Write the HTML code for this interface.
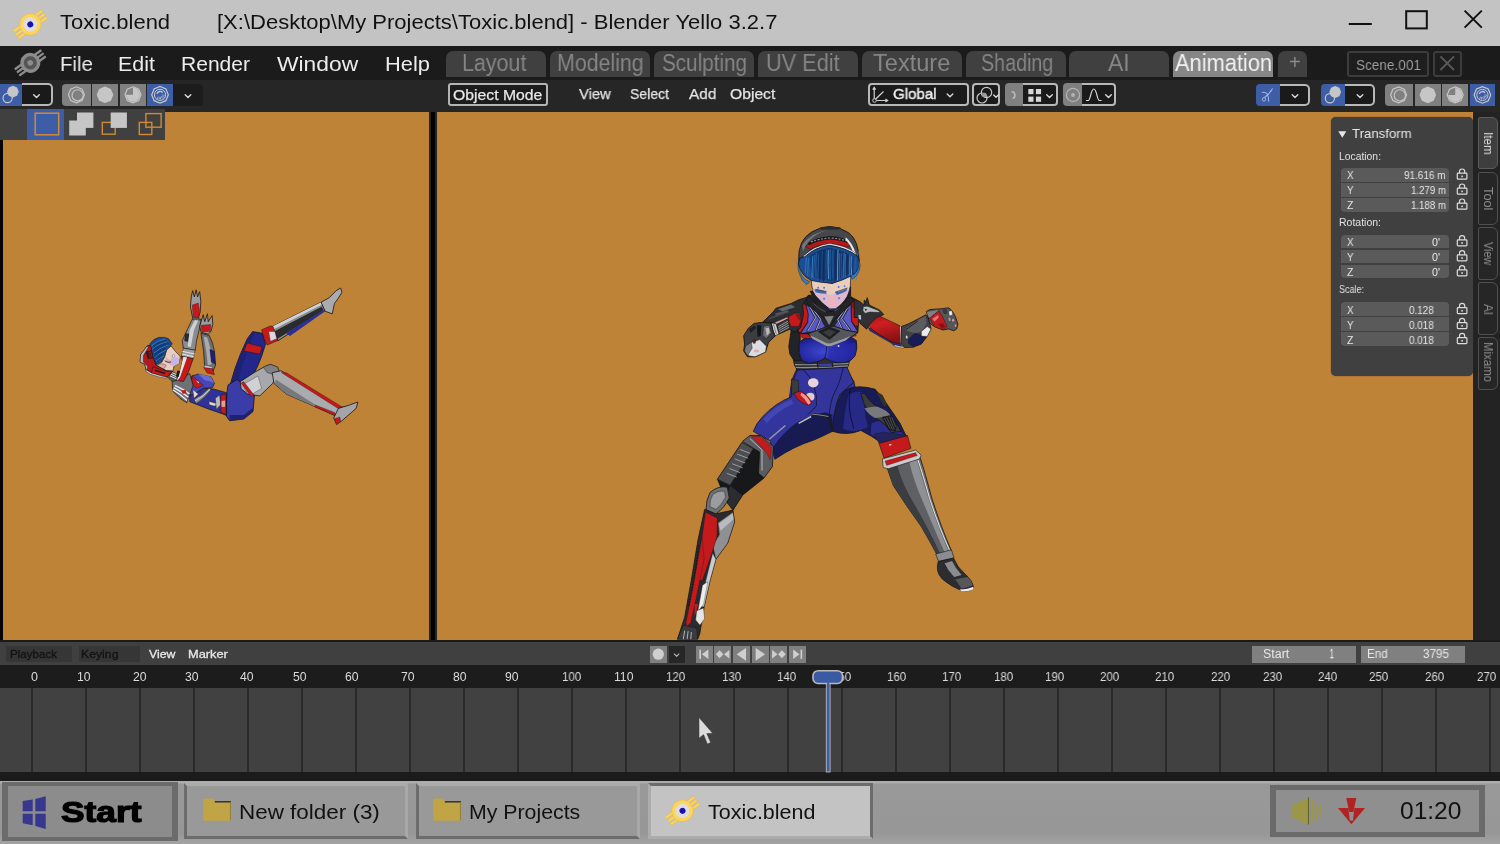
<!DOCTYPE html>
<html><head><meta charset="utf-8"><title>Toxic.blend - Blender Yello 3.2.7</title>
<style>
html,body{margin:0;padding:0;background:#a2a2a2;overflow:hidden}
#root{position:relative;width:1500px;height:844px;overflow:hidden;font-family:"Liberation Sans",sans-serif;background:#242424}
.a{position:absolute;box-sizing:border-box}
.t{position:absolute;white-space:pre;line-height:1;transform-origin:0 50%;display:block;will-change:transform}
svg{position:absolute;left:0;top:0;overflow:visible}

.tab{position:absolute;top:50.5px;height:26.5px;background:#404040;border-radius:7px 7px 0 0}
.gb{position:absolute;background:#808080}
.dd{position:absolute;background:#1a1a1a;border:2.3px solid #b8b8b8;box-sizing:border-box}
.fld{position:absolute;left:1341.3px;width:107.5px;height:13.8px;background:#5a5a5a}
.vt{position:absolute;left:1478px;width:19.7px;height:52.4px;box-sizing:border-box;border:1px solid #505050;border-radius:2px 6px 6px 2px;background:#262626}
.vtt{position:absolute;white-space:pre;line-height:1;transform-origin:0 0;will-change:transform}

</style></head><body><div id="root">
<div class="a" style="left:0px;top:0px;width:1500px;height:45.6px;background:#c3c3c3;"></div>
<div class="a" style="left:0px;top:45.6px;width:1500px;height:34.4px;background:#1b1b1b;"></div>
<div class="a" style="left:0px;top:80px;width:1500px;height:32px;background:#262626;"></div>
<div class="a" style="left:0px;top:111.7px;width:1500px;height:528px;background:#bf8338;"></div>
<div class="a" style="left:0px;top:139.5px;width:3px;height:501px;background:#050505;"></div>
<div class="a" style="left:429px;top:111.7px;width:8px;height:528.3px;background:#252525;"></div>
<div class="a" style="left:431.3px;top:112.3px;width:3.4px;height:527.7px;background:#000;"></div>
<div class="a" style="left:1473px;top:111.7px;width:27px;height:528.3px;background:#232323;"></div>
<div class="a" style="left:0px;top:639.7px;width:1500px;height:2.5px;background:#1a1a1a;"></div>
<div class="a" style="left:0px;top:642px;width:1500px;height:23px;background:#404040;"></div>
<div class="a" style="left:0px;top:665px;width:1500px;height:23px;background:#1c1c1c;"></div>
<div class="a" style="left:0px;top:688px;width:1500px;height:84px;background:#414141;"></div>
<div class="a" style="left:31.2px;top:688px;width:2px;height:84px;background:#2a2a2a;"></div>
<div class="a" style="left:85.18px;top:688px;width:2px;height:84px;background:#2a2a2a;"></div>
<div class="a" style="left:139.16px;top:688px;width:2px;height:84px;background:#2a2a2a;"></div>
<div class="a" style="left:193.14px;top:688px;width:2px;height:84px;background:#2a2a2a;"></div>
<div class="a" style="left:247.12px;top:688px;width:2px;height:84px;background:#2a2a2a;"></div>
<div class="a" style="left:301.1px;top:688px;width:2px;height:84px;background:#2a2a2a;"></div>
<div class="a" style="left:355.08px;top:688px;width:2px;height:84px;background:#2a2a2a;"></div>
<div class="a" style="left:409.06px;top:688px;width:2px;height:84px;background:#2a2a2a;"></div>
<div class="a" style="left:463.04px;top:688px;width:2px;height:84px;background:#2a2a2a;"></div>
<div class="a" style="left:517.02px;top:688px;width:2px;height:84px;background:#2a2a2a;"></div>
<div class="a" style="left:571.0px;top:688px;width:2px;height:84px;background:#2a2a2a;"></div>
<div class="a" style="left:624.98px;top:688px;width:2px;height:84px;background:#2a2a2a;"></div>
<div class="a" style="left:678.96px;top:688px;width:2px;height:84px;background:#2a2a2a;"></div>
<div class="a" style="left:732.94px;top:688px;width:2px;height:84px;background:#2a2a2a;"></div>
<div class="a" style="left:786.92px;top:688px;width:2px;height:84px;background:#2a2a2a;"></div>
<div class="a" style="left:840.9px;top:688px;width:2px;height:84px;background:#2a2a2a;"></div>
<div class="a" style="left:894.88px;top:688px;width:2px;height:84px;background:#2a2a2a;"></div>
<div class="a" style="left:948.86px;top:688px;width:2px;height:84px;background:#2a2a2a;"></div>
<div class="a" style="left:1002.84px;top:688px;width:2px;height:84px;background:#2a2a2a;"></div>
<div class="a" style="left:1056.82px;top:688px;width:2px;height:84px;background:#2a2a2a;"></div>
<div class="a" style="left:1110.8px;top:688px;width:2px;height:84px;background:#2a2a2a;"></div>
<div class="a" style="left:1164.78px;top:688px;width:2px;height:84px;background:#2a2a2a;"></div>
<div class="a" style="left:1218.76px;top:688px;width:2px;height:84px;background:#2a2a2a;"></div>
<div class="a" style="left:1272.74px;top:688px;width:2px;height:84px;background:#2a2a2a;"></div>
<div class="a" style="left:1326.72px;top:688px;width:2px;height:84px;background:#2a2a2a;"></div>
<div class="a" style="left:1380.7px;top:688px;width:2px;height:84px;background:#2a2a2a;"></div>
<div class="a" style="left:1434.68px;top:688px;width:2px;height:84px;background:#2a2a2a;"></div>
<div class="a" style="left:1488.66px;top:688px;width:2px;height:84px;background:#2a2a2a;"></div>
<div class="a" style="left:0px;top:772px;width:1500px;height:8.8px;background:#1b1b1b;"></div>
<div class="a" style="left:0px;top:780.8px;width:1500px;height:63.2px;background:linear-gradient(#adadad 0,#adadad 1.4px,#999 3.5px,#979797 52px,#a3a3a3 63px);"></div>
<div class="tab" style="left:446px;width:100px;background:#404040"></div>
<div class="tab" style="left:550px;width:100px;background:#404040"></div>
<div class="tab" style="left:654px;width:100px;background:#404040"></div>
<div class="tab" style="left:758px;width:100px;background:#404040"></div>
<div class="tab" style="left:862px;width:100px;background:#404040"></div>
<div class="tab" style="left:966px;width:100px;background:#404040"></div>
<div class="tab" style="left:1069px;width:100px;background:#404040"></div>
<div class="tab" style="left:1173px;width:100px;background:#868686"></div>
<div class="tab" style="left:1277.6px;width:29.6px"></div>
<div class="a" style="left:1347.2px;top:51.2px;width:81.6px;height:25.6px;background:#1e1e1e;border:2.2px solid #3c3c3c;border-radius:3px"></div>
<div class="a" style="left:1432.5px;top:51.2px;width:29.5px;height:25.6px;background:#1e1e1e;border:2.2px solid #3c3c3c;border-radius:3px"></div>
<div class="a" style="left:0px;top:83.6px;width:22px;height:22.4px;background:#3d5ea6;"></div>
<div class="dd" style="left:22px;top:83.4px;width:31px;height:23px;border-left:none;border-radius:0 5px 5px 0"></div>
<div class="a" style="left:61.9px;top:83.6px;width:29.0px;height:22.4px;background:#808080;border-radius:4px 0 0 4px"></div>
<div class="a" style="left:92.1px;top:83.6px;width:25.9px;height:22.4px;background:#808080;border-radius:0"></div>
<div class="a" style="left:120px;top:83.6px;width:26px;height:22.4px;background:#808080;border-radius:0"></div>
<div class="a" style="left:147px;top:83.6px;width:26px;height:22.4px;background:#3d5ea6;"></div>
<div class="a" style="left:173px;top:83.6px;width:30px;height:22.4px;background:#1c1c1c;border-radius:0 4px 4px 0"></div>
<div class="a" style="left:447.5px;top:83.3px;width:100.5px;height:22.7px;background:#1c1c1c;border:2px solid #b4b4b4;border-radius:3px"></div>
<div class="dd" style="left:868.1px;top:83.4px;width:100.8px;height:23px;border-radius:4px"></div>
<div class="dd" style="left:972px;top:83.4px;width:28px;height:23px;border-radius:4px"></div>
<div class="a" style="left:1004.5px;top:83.4px;width:21px;height:23px;background:#808080;border-radius:4px 0 0 4px"></div>
<div class="dd" style="left:1023.4px;top:83.4px;width:34.2px;height:23px;border-left:none;border-radius:0 4px 4px 0"></div>
<div class="a" style="left:1063px;top:83.4px;width:21px;height:23px;background:#808080;border-radius:4px 0 0 4px"></div>
<div class="dd" style="left:1081.7px;top:83.4px;width:34.8px;height:23px;border-left:none;border-radius:0 4px 4px 0"></div>
<div class="a" style="left:1256px;top:84px;width:24px;height:21.8px;background:#3d5ea6;border-radius:4px 0 0 4px"></div>
<div class="dd" style="left:1280px;top:84px;width:30px;height:21.8px;border-left:none;border-radius:0 5px 5px 0"></div>
<div class="a" style="left:1321px;top:84px;width:24px;height:21.8px;background:#3d5ea6;border-radius:4px 0 0 4px"></div>
<div class="dd" style="left:1345px;top:84px;width:29.5px;height:21.8px;border-left:none;border-radius:0 5px 5px 0"></div>
<div class="a" style="left:1384.5px;top:84px;width:28.3px;height:21.8px;background:#808080;border-radius:4px 0 0 4px"></div>
<div class="a" style="left:1414.9px;top:84px;width:25.9px;height:21.8px;background:#808080;border-radius:0"></div>
<div class="a" style="left:1442.4px;top:84px;width:25.6px;height:21.8px;background:#808080;border-radius:0"></div>
<div class="a" style="left:1469.6px;top:84px;width:25.6px;height:21.8px;background:#3d5ea6;"></div>
<div class="a" style="left:0px;top:109.2px;width:165px;height:30.4px;background:#404040;"></div>
<div class="a" style="left:27.1px;top:109.2px;width:36.7px;height:30.4px;background:#3d5ea6;"></div>
<div class="a" style="left:6.3px;top:646.2px;width:66.2px;height:16.3px;background:#363636;"></div>
<div class="a" style="left:78.8px;top:646.2px;width:60.9px;height:16.3px;background:#363636;"></div>
<div class="a" style="left:649.8px;top:645.9px;width:17px;height:16.8px;background:#808080;"></div>
<div class="a" style="left:668.6px;top:645.9px;width:16.1px;height:16.8px;background:#262626;"></div>
<div class="a" style="left:695.7px;top:645.9px;width:16.9px;height:16.8px;background:#808080;"></div>
<div class="a" style="left:714.34px;top:645.9px;width:16.9px;height:16.8px;background:#808080;"></div>
<div class="a" style="left:732.98px;top:645.9px;width:16.9px;height:16.8px;background:#808080;"></div>
<div class="a" style="left:751.62px;top:645.9px;width:16.9px;height:16.8px;background:#808080;"></div>
<div class="a" style="left:770.26px;top:645.9px;width:16.9px;height:16.8px;background:#808080;"></div>
<div class="a" style="left:788.9px;top:645.9px;width:16.9px;height:16.8px;background:#808080;"></div>
<div class="a" style="left:1252px;top:646px;width:104px;height:16.6px;background:#808080;"></div>
<div class="a" style="left:1361px;top:646px;width:104px;height:16.6px;background:#808080;"></div>
<div class="a" style="left:2px;top:781.7px;width:176.4px;height:59px;background:#8c8c8c;border:solid #6b6b6b;border-width:4.6px 6.3px"></div>
<div class="a" style="left:184.2px;top:782.5px;width:223.8px;height:56.2px;background:#999;border-left:3.3px solid #6c6c6c;border-bottom:3px solid #6c6c6c;border-top:3.5px solid #ababab;border-right:3.3px solid #a9a9a9"></div>
<div class="a" style="left:415.8px;top:782.5px;width:223.9px;height:56.2px;background:#999;border-left:3.3px solid #6c6c6c;border-bottom:3px solid #6c6c6c;border-top:3.5px solid #ababab;border-right:3.3px solid #a9a9a9"></div>
<div class="a" style="left:647.5px;top:783px;width:225px;height:56.2px;background:#c3c3c3;border-top:3.2px solid #6c6c6c;border-right:3.5px solid #6c6c6c;border-left:3.5px solid #acacac;border-bottom:3.2px solid #acacac"></div>
<div class="a" style="left:1270px;top:784.7px;width:215.3px;height:52.3px;background:#8f8f8f;border:solid #6a6a6a;border-width:5px 6.7px"></div>
<div class="a" style="left:1331px;top:117.3px;width:141.5px;height:258.5px;background:#404040;border-radius:5px;box-shadow:0 0 1px #2a2a2a"></div>
<div class="fld" style="top:168.0px;border-radius:4px 4px 0 0"></div>
<div class="fld" style="top:183.0px;border-radius:0"></div>
<div class="fld" style="top:198.0px;border-radius:0 0 4px 4px"></div>
<div class="fld" style="top:234.6px;border-radius:4px 4px 0 0"></div>
<div class="fld" style="top:249.6px;border-radius:0"></div>
<div class="fld" style="top:264.6px;border-radius:0 0 4px 4px"></div>
<div class="fld" style="top:302.4px;border-radius:4px 4px 0 0"></div>
<div class="fld" style="top:317.4px;border-radius:0"></div>
<div class="fld" style="top:332.4px;border-radius:0 0 4px 4px"></div>
<div class="vt" style="top:117px;background:#3e3e3e;border-color:#5c5c5c"></div>
<div class="vt" style="top:172.4px;"></div>
<div class="vt" style="top:227.4px;"></div>
<div class="vt" style="top:282.3px;"></div>
<div class="vt" style="top:337.4px;"></div>
<svg width="1500" height="844" viewBox="0 0 1500 844">
<defs><clipPath id="vp"><rect x="437" y="112" width="1036" height="527.7"/></clipPath><clipPath id="vpl"><rect x="3" y="112" width="426" height="527.7"/></clipPath></defs><g clip-path="url(#vp)"><polygon points="797.1,368.2 846.0,367.7 849.3,374.7 853.8,381.2 855.1,387.1 846.0,390.4 836.9,398.2 833.0,403.4 788.7,403.4 790.6,389.1 791.9,379.9" fill="#33359c" stroke="#141414" stroke-width="0.8" stroke-linejoin="round" />
<polygon points="797.1,368.2 805.6,373.4 813.4,386.5 816.0,403.4 788.7,403.4 790.6,389.1 791.9,379.9" fill="#2b2d8c" stroke="#141414" stroke-width="0" stroke-linejoin="round" />
<g transform="translate(740,370) scale(0.177778)" stroke-linejoin="round"><path d="M520,250 Q560,130 600,110 Q660,80 760,108 Q830,190 900,300 L932,366 L800,412 Q740,370 680,340 Q600,372 520,345 Z" fill="#191b58" stroke="#141414" stroke-width="0.8" vector-effect="non-scaling-stroke" /><path d="M610,140 Q650,110 700,130 Q690,220 720,320 L680,338 Q620,350 580,330 Q590,220 610,140 Z" fill="#262a86" stroke="#141414" stroke-width="0" vector-effect="non-scaling-stroke" /><path d="M740,300 L800,280 L880,330 L925,365 L800,410 Q770,380 735,360 Z" fill="#2a2d8e" stroke="#141414" stroke-width="0" vector-effect="non-scaling-stroke" /><path d="M620,110 Q600,200 640,330" fill="none" stroke="#0c0d2a" stroke-width="0.8" vector-effect="non-scaling-stroke" /><path d="M678,130 L702,132 Q730,180 770,205 Q830,225 870,280 L905,345 L850,352 Q820,300 760,270 Q720,240 700,195 Z" fill="#3a3b3f" stroke="#141414" stroke-width="0.8" vector-effect="non-scaling-stroke" /><path d="M700,215 Q740,205 770,205 Q830,225 850,260 L760,270 Q720,250 700,215 Z" fill="#77797d" stroke="#141414" stroke-width="0" vector-effect="non-scaling-stroke" /><path d="M800,265 L850,255 L882,300 L875,345 L835,335 Z" fill="#1c1d20" stroke="#141414" stroke-width="0.4" vector-effect="non-scaling-stroke" /><path d="M812,270 L845,330 M825,265 L858,335 M840,262 L868,335 M853,265 L876,320" fill="none" stroke="#6a6c70" stroke-width="0.6" vector-effect="non-scaling-stroke" /><path d="M760,120 L800,140 L830,200 L810,210 Z" fill="#2f3034" stroke="#141414" stroke-width="0.4" vector-effect="non-scaling-stroke" /><path d="M330,-20 L600,-20 L640,70 Q600,100 560,140 Q520,250 520,345 Q470,370 420,392 Q300,430 196,502 L170,400 L75,345 Q90,300 130,260 Q200,185 290,150 Q285,80 330,-20 Z" fill="#33359c" stroke="#141414" stroke-width="0.8" vector-effect="non-scaling-stroke" /><path d="M330,290 Q400,250 480,238 L520,250 L520,345 Q470,370 420,392 Q300,430 196,502 L180,440 Q260,330 330,290 Z" fill="#181a52" stroke="#141414" stroke-width="0" vector-effect="non-scaling-stroke" /><path d="M130,275 Q200,200 290,165 L300,190 Q210,230 150,300 Z" fill="#4a4ec0" stroke="" stroke-width="0" vector-effect="non-scaling-stroke" opacity="0.7"/><path d="M405,248 Q470,255 498,262 Q515,300 520,345" fill="none" stroke="#1a1b1e" stroke-width="2.2" vector-effect="non-scaling-stroke" /><path d="M405,248 Q470,255 498,262" fill="none" stroke="#a0a2a6" stroke-width="0.8" vector-effect="non-scaling-stroke" /><path d="M330,300 L400,262" fill="none" stroke="#b9bbbf" stroke-width="1.6" vector-effect="non-scaling-stroke" /><path d="M165,390 L255,312" fill="none" stroke="#9a9ca0" stroke-width="1.4" vector-effect="non-scaling-stroke" /><path d="M350,-10 Q440,80 430,200 Q400,240 380,250" fill="none" stroke="#10112e" stroke-width="0.8" vector-effect="non-scaling-stroke" /><path d="M580,-10 Q560,80 530,130 Q510,170 500,260" fill="none" stroke="#10112e" stroke-width="0.8" vector-effect="non-scaling-stroke" /><ellipse cx="412" cy="72" rx="30" ry="26" fill="#e6d4d8"/><ellipse cx="395" cy="150" rx="24" ry="22" fill="#e9c9c8"/><path d="M290,50 L330,60 L330,120 L290,140 Z" fill="#3a3b3f" stroke="#141414" stroke-width="0.5" vector-effect="non-scaling-stroke" /><path d="M305,130 L340,118 Q385,140 405,185 L385,198 Q350,190 320,160 Z" fill="#c41a1c" stroke="#141414" stroke-width="0.5" vector-effect="non-scaling-stroke" /><path d="M345,128 Q380,145 398,185 L385,195 Q365,160 340,140 Z" fill="#ee9a98" stroke="#141414" stroke-width="0" vector-effect="non-scaling-stroke" /></g>
<g transform="translate(670,420) scale(0.266667)" stroke-linejoin="round"><path d="M272,80 L300,58 L342,58 L388,100 L384,175 L352,218 L330,200 L335,120 Z" fill="#5a5c60" stroke="#141414" stroke-width="0.8" vector-effect="non-scaling-stroke" /><path d="M305,62 L340,62 L380,102 L376,150 L360,120 Z" fill="#c41a1c" stroke="#141414" stroke-width="0.3" vector-effect="non-scaling-stroke" /><path d="M300,70 L345,112 L345,190" fill="none" stroke="#b9bbbf" stroke-width="1.0" vector-effect="non-scaling-stroke" /><path d="M270,84 L335,120 L332,200 L352,218 L272,282 L236,338 L210,300 L178,222 Z" fill="#17181a" stroke="#141414" stroke-width="0.8" vector-effect="non-scaling-stroke" /><path d="M270,84 L312,108 L225,245 L178,222 Z" fill="#4c4e52" stroke="#141414" stroke-width="0.4" vector-effect="non-scaling-stroke" /><path d="M262,110 L300,125 M252,128 L292,143 M243,146 L282,161 M233,164 L272,179 M223,182 L262,197 M213,200 L250,214" fill="none" stroke="#9a9ca0" stroke-width="1.0" vector-effect="non-scaling-stroke" /><path d="M225,245 L272,282 L236,338 L205,300 Z" fill="#2b2c30" stroke="#141414" stroke-width="0.4" vector-effect="non-scaling-stroke" /><path d="M130,335 L172,352 L236,338 L242,382 L216,462 L172,522 L150,602 L128,700 L112,800 L104,822 L28,822 L55,740 L80,600 L105,450 Z" fill="#2a2b2e" stroke="#141414" stroke-width="0.8" vector-effect="non-scaling-stroke" /><path d="M180,385 L236,345 L242,382 L216,462 L172,522 L160,470 L185,430 Z" fill="#8e9094" stroke="#141414" stroke-width="0.4" vector-effect="non-scaling-stroke" /><path d="M172,522 L150,602 L128,700 L118,700 L135,600 L160,500 Z" fill="#c9cbce" stroke="#141414" stroke-width="0.3" vector-effect="non-scaling-stroke" /><path d="M182,390 L236,350 L238,372 L190,415 Z" fill="#b9bbbf" stroke="#141414" stroke-width="0" vector-effect="non-scaling-stroke" /><path d="M133,345 L178,368 L176,440 L150,520 L122,600 L100,606 L114,480 Z" fill="#c41a1c" stroke="#141414" stroke-width="0.4" vector-effect="non-scaling-stroke" /><path d="M120,440 L128,520 L104,640 L78,760 L62,775 L60,760 L84,640 Z" fill="#c41a1c" stroke="#141414" stroke-width="0.3" vector-effect="non-scaling-stroke" /><path d="M108,470 L96,560 L70,700" fill="none" stroke="#141414" stroke-width="1.1" vector-effect="non-scaling-stroke" stroke-dasharray="1.5 1.5"/><path d="M122,620 L142,606 L126,690 L104,720 Z" fill="#ededef" stroke="#141414" stroke-width="0.3" vector-effect="non-scaling-stroke" /><path d="M100,715 L126,705 L130,745 L112,770 L96,750 Z" fill="#e4e4e6" stroke="#141414" stroke-width="0.4" vector-effect="non-scaling-stroke" /><path d="M92,690 L106,690 L92,740 Z" fill="#c41a1c" stroke="#141414" stroke-width="0" vector-effect="non-scaling-stroke" /><path d="M150,272 Q180,245 215,252 L222,292 Q205,330 172,352 L135,336 Q135,300 150,272 Z" fill="#6e7074" stroke="#141414" stroke-width="0.8" vector-effect="non-scaling-stroke" /><path d="M160,280 Q182,262 205,268 L208,290 Q195,318 172,335 L150,325 Q148,300 160,280 Z" fill="#9a9ca0" stroke="#141414" stroke-width="0.4" vector-effect="non-scaling-stroke" /><path d="M50,770 L100,780 L104,822 L28,822 Z" fill="#3a3b3f" stroke="#141414" stroke-width="0.4" vector-effect="non-scaling-stroke" /><path d="M55,790 L50,822 M68,792 L64,822 M80,795 L78,822" fill="none" stroke="#d0d0d2" stroke-width="0.8" vector-effect="non-scaling-stroke" /></g>
<defs><linearGradient id="shinR" x1="0" y1="0" x2="1" y2="0"><stop offset="0" stop-color="#242528"/><stop offset="0.3" stop-color="#5e6064"/><stop offset="0.6" stop-color="#8d8f93"/><stop offset="0.85" stop-color="#6a6c70"/><stop offset="1" stop-color="#d8d9dc"/></linearGradient></defs><g transform="translate(870,430) scale(0.21314)" stroke-linejoin="round"><path d="M82,182 L236,132 Q258,200 290,320 Q335,460 382,566 L314,584 Q280,520 240,452 Q170,355 110,262 Z" fill="#6e7074" stroke="#141414" stroke-width="0.8" vector-effect="non-scaling-stroke" /><path d="M82,182 L130,168 Q150,250 210,350 Q270,450 330,580 L314,584 Q280,520 240,452 Q170,355 110,262 Z" fill="#3c3d41" stroke="#141414" stroke-width="0" vector-effect="non-scaling-stroke" /><path d="M130,168 L185,150 Q205,240 250,340 Q300,460 350,574 L330,580 Q270,450 210,350 Q150,250 130,168 Z" fill="#5e6064" stroke="#141414" stroke-width="0" vector-effect="non-scaling-stroke" /><path d="M185,150 L220,138 Q240,220 275,325 Q320,460 368,570 L350,574 Q300,460 250,340 Q205,240 185,150 Z" fill="#8e9094" stroke="#141414" stroke-width="0" vector-effect="non-scaling-stroke" /><path d="M225,140 Q247,205 280,322 Q326,462 374,566" fill="none" stroke="#e4e5e8" stroke-width="1.0" vector-effect="non-scaling-stroke" /><path d="M42,62 L176,26 L192,86 L66,132 Z" fill="#c41a1c" stroke="#141414" stroke-width="0.6" vector-effect="non-scaling-stroke" /><path d="M90,70 L100,68" fill="none" stroke="#f6d0d0" stroke-width="1.5" vector-effect="non-scaling-stroke" /><path d="M58,136 L214,94 L240,118 L232,136 L86,182 L62,176 Z" fill="#c9cbce" stroke="#141414" stroke-width="0.6" vector-effect="non-scaling-stroke" /><path d="M70,146 L214,106 L222,120 L78,166 Z" fill="#c41a1c" stroke="#141414" stroke-width="0.3" vector-effect="non-scaling-stroke" /><path d="M20,20 L60,10 L175,26 L42,62 Z" fill="#23245e" stroke="#141414" stroke-width="0.4" vector-effect="non-scaling-stroke" /><path d="M308,582 L382,562 L394,600 L322,617 Z" fill="#8a8c90" stroke="#141414" stroke-width="0.6" vector-effect="non-scaling-stroke" /><path d="M320,617 L392,601 Q410,645 445,675 Q480,705 486,738 Q470,758 436,756 Q380,735 340,700 Q305,665 320,617 Z" fill="#2c2d31" stroke="#141414" stroke-width="0.7" vector-effect="non-scaling-stroke" /><path d="M350,625 L385,615 Q400,650 430,680 L395,690 Q365,660 350,625 Z" fill="#8a8c90" stroke="#141414" stroke-width="0" vector-effect="non-scaling-stroke" /><path d="M400,700 L460,690 Q478,710 482,730 L430,745 Z" fill="#55575b" stroke="#141414" stroke-width="0" vector-effect="non-scaling-stroke" /><path d="M420,748 Q460,748 486,736 L482,748 Q455,760 430,757 Z" fill="#ededef" stroke="#141414" stroke-width="0" vector-effect="non-scaling-stroke" /></g>
<defs><radialGradient id="bustL" cx="0.45" cy="0.55" r="0.6"><stop offset="0" stop-color="#3f49cf"/><stop offset="0.7" stop-color="#262aa6"/><stop offset="1" stop-color="#1b1e80"/></radialGradient></defs><g transform="translate(785,295) scale(0.094787)" stroke-linejoin="round"><path d="M40,540 L66,370 L160,350 L160,500 L145,610 L180,690 L100,702 L50,620 Z" fill="#222327" stroke="#141414" stroke-width="0.8" vector-effect="non-scaling-stroke" /><path d="M90,690 L180,690 L260,720 L360,700 L420,665 L470,690 L560,715 L680,700 L662,762 L130,792 L100,740 Z" fill="#2e2f33" stroke="#141414" stroke-width="0.8" vector-effect="non-scaling-stroke" /><path d="M105,735 Q380,740 672,722 M115,765 Q380,770 665,748" fill="none" stroke="#8a8c90" stroke-width="1.2" vector-effect="non-scaling-stroke" /><path d="M340,720 L350,765 M500,720 L505,760" fill="none" stroke="#17181a" stroke-width="1.2" vector-effect="non-scaling-stroke" /><path d="M355,722 L495,722 L498,752 L360,755 Z" fill="#3a3ea8" stroke="#141414" stroke-width="0.4" vector-effect="non-scaling-stroke" /><path d="M150,500 L200,460 L300,450 L440,535 L480,535 L600,470 L700,445 L752,480 Q770,560 740,640 Q700,700 640,712 L560,716 Q500,705 470,690 L420,662 Q390,690 360,700 L260,722 Q200,715 180,690 Q140,640 150,500 Z" fill="url(#bustL)" stroke="#141414" stroke-width="0.8" vector-effect="non-scaling-stroke" /><path d="M470,560 Q600,520 740,500 Q760,570 735,640 Q690,700 600,712 Q520,705 470,690 Q440,620 470,560 Z" fill="#262aa8" stroke="" stroke-width="0" vector-effect="non-scaling-stroke" opacity="0.6"/><path d="M420,662 Q440,600 440,540" fill="none" stroke="#12144a" stroke-width="0.8" vector-effect="non-scaling-stroke" /><circle cx="565" cy="538" r="10" fill="#e8d6c8"/><path d="M140,380 L165,90 L250,0 L700,20 L770,60 L775,320 L770,395 L700,440 L600,470 L480,535 L440,535 L300,450 L240,412 L150,412 Z" fill="#26272a" stroke="#141414" stroke-width="0.6" vector-effect="non-scaling-stroke" /><path d="M165,90 L216,100 L246,200 L240,282 L160,402 L140,380 L172,260 Z" fill="#c41a1c" stroke="#141414" stroke-width="0.5" vector-effect="non-scaling-stroke" /><path d="M700,70 L770,60 L775,322 L745,332 L700,272 Z" fill="#c41a1c" stroke="#141414" stroke-width="0.5" vector-effect="non-scaling-stroke" /><path d="M705,75 L765,68 L768,130 L708,140 Z" fill="#8f1517" stroke="#141414" stroke-width="0" vector-effect="non-scaling-stroke" /><path d="M150,412 L240,412 L282,440 L180,452 Z" fill="#c41a1c" stroke="#141414" stroke-width="0.4" vector-effect="non-scaling-stroke" /><path d="M660,420 L742,400 L752,430 L690,442 Z" fill="#c41a1c" stroke="#141414" stroke-width="0.4" vector-effect="non-scaling-stroke" /><path d="M220,100 L290,150 L380,250 L426,340 L300,386 L165,406 L240,290 L246,200 Z" fill="#5a58c4" stroke="#141414" stroke-width="0.6" vector-effect="non-scaling-stroke" /><path d="M520,330 L580,230 L660,130 L696,100 L700,280 L770,392 L640,372 Z" fill="#5a58c4" stroke="#141414" stroke-width="0.6" vector-effect="non-scaling-stroke" /><path d="M260,130 L322,240 L232,385 M300,160 L372,262 L322,378" fill="none" stroke="#2a2b50" stroke-width="2.2" vector-effect="non-scaling-stroke" /><path d="M262,126 L326,238 L240,380 M303,156 L376,258 L328,374" fill="none" stroke="#c9cbe6" stroke-width="0.8" vector-effect="non-scaling-stroke" /><path d="M664,140 L600,250 L690,372 M625,170 L560,262 L610,366" fill="none" stroke="#2a2b50" stroke-width="2.2" vector-effect="non-scaling-stroke" /><path d="M660,136 L596,248 L684,370 M621,166 L556,258 L604,364" fill="none" stroke="#c9cbe6" stroke-width="0.8" vector-effect="non-scaling-stroke" /><path d="M250,0 L300,60 L350,130 L430,180 L520,170 L600,120 L660,40 L700,20 L722,60 L640,150 L540,240 L470,332 L410,240 L330,180 L250,110 L220,60 Z" fill="#232427" stroke="#141414" stroke-width="0.8" vector-effect="non-scaling-stroke" /><path d="M410,225 L520,215 L466,326 Z" fill="#808286" stroke="#141414" stroke-width="0.5" vector-effect="non-scaling-stroke" /><path d="M300,90 Q360,150 430,180 M640,80 Q590,140 520,170" fill="none" stroke="#55575b" stroke-width="1.0" vector-effect="non-scaling-stroke" /><path d="M240,410 L426,340 L470,330 L520,330 L640,372 L770,395 L700,440 L600,470 L480,535 L440,535 L300,450 Z" fill="#55575b" stroke="#141414" stroke-width="0.8" vector-effect="non-scaling-stroke" /><path d="M350,386 L466,336 L580,380 L470,470 Z" fill="#1f2023" stroke="#141414" stroke-width="0.5" vector-effect="non-scaling-stroke" /><path d="M390,392 L466,360 L540,388 L470,445 Z" fill="#3a3b3f" stroke="#141414" stroke-width="0.4" vector-effect="non-scaling-stroke" /><path d="M262,422 L440,508 L480,512 L700,430 L640,480 L480,540 L440,540 L290,462 Z" fill="#9a9ca0" stroke="#141414" stroke-width="0" vector-effect="non-scaling-stroke" /></g>
<g transform="translate(738,295) scale(0.094787)" stroke-linejoin="round"><path d="M740,20 L640,50 L560,90 L400,140 L370,180 L262,286 L300,300 L360,292 L410,320 L430,412 L540,362 L600,392 L662,342 L692,200 L682,100 Z" fill="#2c2d31" stroke="#141414" stroke-width="0.8" vector-effect="non-scaling-stroke" /><path d="M420,150 L560,100 L602,130 L470,172 Z" fill="#66686c" stroke="#141414" stroke-width="0" vector-effect="non-scaling-stroke" /><path d="M392,195 L520,160 L542,180 L402,226 Z" fill="#55575b" stroke="#141414" stroke-width="0" vector-effect="non-scaling-stroke" /><path d="M330,240 L470,190 L480,205 L320,262 Z" fill="#47494d" stroke="#141414" stroke-width="0" vector-effect="non-scaling-stroke" /><path d="M530,232 L600,190 L652,190 L662,280 L642,332 L560,332 L540,290 Z" fill="#c41a1c" stroke="#141414" stroke-width="0.4" vector-effect="non-scaling-stroke" /><path d="M600,190 L652,190 L662,280 L630,250 Z" fill="#8f1517" stroke="#141414" stroke-width="0" vector-effect="non-scaling-stroke" /><path d="M392,290 L520,235 L526,250 L402,306 Z" fill="#d9a3a0" stroke="#141414" stroke-width="0" vector-effect="non-scaling-stroke" /><path d="M410,320 L520,252 L540,330 L540,362 L430,412 Z" fill="#3a3b3f" stroke="#141414" stroke-width="0.5" vector-effect="non-scaling-stroke" /><path d="M425,335 L528,275 M430,355 L532,295 M434,375 L536,318 M438,395 L540,340" fill="none" stroke="#9a9ca0" stroke-width="0.9" vector-effect="non-scaling-stroke" /><path d="M350,296 L400,300 L432,410 L392,432 L370,380 Z" fill="#c9cbce" stroke="#141414" stroke-width="0.6" vector-effect="non-scaling-stroke" /><path d="M372,300 L404,410" fill="none" stroke="#6e7074" stroke-width="0.8" vector-effect="non-scaling-stroke" /><path d="M262,288 L170,300 L110,350 L60,430 L70,520 L60,590 L100,652 L180,652 L290,602 L322,500 L392,432 L370,380 L350,296 Z" fill="#3c3d41" stroke="#141414" stroke-width="0.9" vector-effect="non-scaling-stroke" /><path d="M120,360 L180,320 L190,350 L130,400 Z" fill="#1f2023" stroke="#141414" stroke-width="0" vector-effect="non-scaling-stroke" /><path d="M200,320 L246,320 L240,432 L206,442 Z" fill="#141518" stroke="#141414" stroke-width="0" vector-effect="non-scaling-stroke" /><path d="M270,330 L330,320 L350,400 L300,460 L262,430 Z" fill="#6e7074" stroke="#141414" stroke-width="0.4" vector-effect="non-scaling-stroke" /><path d="M290,350 L325,345 L335,395 L305,430 Z" fill="#b9bbbf" stroke="#141414" stroke-width="0" vector-effect="non-scaling-stroke" /><path d="M140,500 L230,470 L300,540 L290,602 L180,652 L110,642 L90,580 Z" fill="#dcdde0" stroke="#141414" stroke-width="0.5" vector-effect="non-scaling-stroke" /><path d="M80,540 L140,500 L150,560 L100,640 L70,590 Z" fill="#77797d" stroke="#141414" stroke-width="0.4" vector-effect="non-scaling-stroke" /><path d="M160,470 L190,465 L185,510 L160,515 Z" fill="#5a1a1c" stroke="#141414" stroke-width="0" vector-effect="non-scaling-stroke" /><ellipse cx="195" cy="590" rx="28" ry="16" fill="#e3a9a8"/></g>
<defs><linearGradient id="armR" x1="0" y1="0" x2="0.35" y2="1"><stop offset="0" stop-color="#a51517"/><stop offset="0.35" stop-color="#d01e20"/><stop offset="1" stop-color="#8a1214"/></linearGradient></defs><g transform="translate(855,290) scale(0.082957)" stroke-linejoin="round"><path d="M-10,110 L60,140 L108,182 L112,120 L128,150 L148,92 L172,182 L300,245 L346,296 L262,332 L172,422 L140,472 L60,402 L40,332 L-10,332 Z" fill="#303135" stroke="#141414" stroke-width="0.8" vector-effect="non-scaling-stroke" /><path d="M100,200 L150,195 L290,250 L300,272 L180,266 L120,282 L95,250 Z" fill="#b9bbbf" stroke="#141414" stroke-width="0.5" vector-effect="non-scaling-stroke" /><path d="M115,225 L146,230 L130,256 Z" fill="#2a2b2f" stroke="#141414" stroke-width="0" vector-effect="non-scaling-stroke" /><path d="M40,300 L70,300 L75,360 L45,350 Z" fill="#b9bbd0" stroke="#141414" stroke-width="0" vector-effect="non-scaling-stroke" /><path d="M160,450 L200,470 L300,540 L460,630 L545,642 L560,680 L470,672 L440,642 L180,492 Z" fill="#2a2c8a" stroke="#141414" stroke-width="0.5" vector-effect="non-scaling-stroke" /><path d="M470,660 L560,680 L600,692 L580,700 L480,680 Z" fill="#d8d9dc" stroke="#141414" stroke-width="0.3" vector-effect="non-scaling-stroke" /><path d="M170,422 L262,332 L300,316 L540,430 L560,470 L546,642 L460,632 L300,542 L200,472 Z" fill="url(#armR)" stroke="#141414" stroke-width="0.6" vector-effect="non-scaling-stroke" /><path d="M549,440 L556,642" fill="none" stroke="#ecc9c9" stroke-width="1.0" vector-effect="non-scaling-stroke" /><path d="M560,440 L640,410 L760,350 L850,300 L880,320 L900,400 L916,470 L870,560 L800,650 L700,690 L600,692 L556,650 Z" fill="#3f4145" stroke="#141414" stroke-width="0.8" vector-effect="non-scaling-stroke" /><path d="M600,470 L760,360 L850,310 L862,400 L800,500 L720,522 L620,492 Z" fill="#5a5c60" stroke="#141414" stroke-width="0" vector-effect="non-scaling-stroke" /><path d="M610,480 L760,372" fill="none" stroke="#17181a" stroke-width="0.9" vector-effect="non-scaling-stroke" /><path d="M640,600 L720,520 L860,560 L800,650 L700,682 L650,652 Z" fill="#1a1c58" stroke="#141414" stroke-width="0.4" vector-effect="non-scaling-stroke" /><path d="M800,500 L870,440 L916,470 L870,560 L800,556 Z" fill="#ebebed" stroke="#141414" stroke-width="0.4" vector-effect="non-scaling-stroke" /><path d="M615,545 L635,560 L630,590 L612,575 Z" fill="#d8d9dc" stroke="#141414" stroke-width="0" vector-effect="non-scaling-stroke" /><path d="M860,260 L900,236 L1050,225 L1130,215 L1170,250 L1210,320 L1240,410 L1226,470 L1190,492 L1130,470 L1060,482 L960,442 L900,400 L880,320 Z" fill="#55575b" stroke="#141414" stroke-width="0.8" vector-effect="non-scaling-stroke" /><path d="M860,260 L1000,236 L1010,250 L900,340 L880,320 Z" fill="#7e8084" stroke="#141414" stroke-width="0.4" vector-effect="non-scaling-stroke" /><path d="M900,340 L1010,250 L1060,330 L1112,440 L1060,480 L960,442 Z" fill="#c41a1c" stroke="#141414" stroke-width="0.4" vector-effect="non-scaling-stroke" /><path d="M930,350 L1000,300 L1010,330 L960,380 Z" fill="#e9b4b4" stroke="" stroke-width="0" vector-effect="non-scaling-stroke" opacity="0.6"/><path d="M1000,410 L1060,400 L1090,440 L1050,470 Z" fill="#8a1214" stroke="#141414" stroke-width="0" vector-effect="non-scaling-stroke" /><path d="M1130,255 L1170,250 L1176,300 L1136,310 Z" fill="#f0f0f2" stroke="#141414" stroke-width="0.3" vector-effect="non-scaling-stroke" /><path d="M1060,240 L1100,235 L1110,280 L1075,285 Z" fill="#3a3b3f" stroke="#141414" stroke-width="0.3" vector-effect="non-scaling-stroke" /><ellipse cx="1182" cy="365" rx="16" ry="20" fill="#e6a0a0" stroke="#141414" stroke-width="3"/><ellipse cx="1212" cy="432" rx="13" ry="18" fill="#e6a0a0" stroke="#141414" stroke-width="3"/><path d="M1120,330 L1150,325 L1160,370 L1128,380 Z" fill="#9a9ca0" stroke="#141414" stroke-width="0.3" vector-effect="non-scaling-stroke" /></g>
<g transform="translate(780,220) scale(0.11848)" stroke-linejoin="round"><path d="M250,600 L300,700 L420,770 L520,740 L600,640 L600,560 Z" fill="#1f2023" stroke="#141414" stroke-width="0" vector-effect="non-scaling-stroke" /><path d="M262,500 L440,537 L597,470 Q606,560 566,645 Q520,720 470,744 L420,748 Q350,700 296,630 Q262,570 262,500 Z" fill="#e9cdbf" stroke="#141414" stroke-width="0.7" vector-effect="non-scaling-stroke" /><path d="M275,585 Q340,600 380,612 Q420,645 470,618 Q520,600 585,575 Q575,630 545,670 Q510,715 470,744 L420,748 Q360,705 305,640 Q283,610 275,585 Z" fill="#dcb9cf" stroke="#141414" stroke-width="0" vector-effect="non-scaling-stroke" /><path d="M290,585 Q340,590 390,606 L392,622 Q340,625 300,610 Z" fill="#3b66b0" stroke="#141414" stroke-width="0" vector-effect="non-scaling-stroke" /><path d="M465,612 Q520,600 568,578 L560,600 Q520,625 480,632 Z" fill="#3b66b0" stroke="#141414" stroke-width="0" vector-effect="non-scaling-stroke" /><path d="M300,585 L392,604" fill="none" stroke="#23242a" stroke-width="0.7" vector-effect="non-scaling-stroke" /><path d="M465,610 L570,574" fill="none" stroke="#23242a" stroke-width="0.7" vector-effect="non-scaling-stroke" /><path d="M418,640 Q440,632 462,640 L476,715 Q445,742 408,712 Z" fill="#f0b4be" stroke="#141414" stroke-width="0" vector-effect="non-scaling-stroke" /><path d="M395,742 Q440,760 490,738 L470,752 L420,756 Z" fill="#5752c0" stroke="#141414" stroke-width="0" vector-effect="non-scaling-stroke" /><circle cx="322" cy="572" r="8" fill="#5a6fd6"/><circle cx="372" cy="572" r="8" fill="#5a6fd6"/><circle cx="495" cy="565" r="8" fill="#5a6fd6"/><circle cx="545" cy="558" r="8" fill="#5a6fd6"/><circle cx="372" cy="665" r="8" fill="#5a6fd6"/><circle cx="498" cy="660" r="8" fill="#5a6fd6"/><path d="M158,335 Q150,170 270,100 Q340,58 420,55 Q505,58 580,108 Q665,170 668,345 L640,286 Q560,226 420,200 Q280,215 205,300 Z" fill="#45474b" stroke="#141414" stroke-width="0.9" vector-effect="non-scaling-stroke" /><path d="M185,215 Q260,105 420,78 Q330,100 262,160 Q215,205 195,265 Z" fill="#75777b" stroke="#141414" stroke-width="0" vector-effect="non-scaling-stroke" /><path d="M215,222 Q300,162 420,150 Q540,158 606,205 L566,230 Q500,205 420,200 Q320,208 250,246 Z" fill="#b5181b" stroke="#141414" stroke-width="0.4" vector-effect="non-scaling-stroke" /><path d="M232,196 Q310,146 420,136 Q530,142 590,184 L578,197 Q520,170 420,164 Q320,170 248,214 Z" fill="#17181b" stroke="#141414" stroke-width="0" vector-effect="non-scaling-stroke" /><path d="M262,186 Q330,158 420,152 Q500,154 560,176" fill="none" stroke="#8d8f93" stroke-width="1.2" vector-effect="non-scaling-stroke" stroke-dasharray="2 1.5"/><path d="M555,145 Q610,190 640,282 L612,262 Q595,205 552,168 Z" fill="#e8e8ea" stroke="#141414" stroke-width="0" vector-effect="non-scaling-stroke" /><path d="M340,62 L350,82 L500,80 L512,64 Q420,48 340,62 Z" fill="#2a2b2e" stroke="#141414" stroke-width="0" vector-effect="non-scaling-stroke" /><path d="M198,304 Q290,215 420,198 Q560,215 644,284 L646,300 Q560,236 420,214 Q300,226 210,316 Z" fill="#e2e3e6" stroke="#141414" stroke-width="0.3" vector-effect="non-scaling-stroke" /><path d="M206,312 Q300,228 420,214 Q556,236 645,298 Q680,335 668,400 Q650,450 600,472 Q520,515 440,533 Q340,530 262,510 Q200,480 170,420 Q146,365 160,325 Z" fill="#1c4c94" stroke="#141414" stroke-width="0.7" vector-effect="non-scaling-stroke" /><path d="M255,300 Q330,245 420,236 Q520,250 600,300 Q625,380 590,450 Q520,490 440,515 Q350,510 285,480 Q240,400 255,300 Z" fill="#123468" stroke="#141414" stroke-width="0" vector-effect="non-scaling-stroke" /><path d="M223,313 Q217,381 214,450" fill="none" stroke="#3d8fd0" stroke-width="0.6" vector-effect="non-scaling-stroke" /><path d="M241,325 Q235,398 234,472" fill="none" stroke="#2c6cb4" stroke-width="1.2" vector-effect="non-scaling-stroke" /><path d="M257,311 Q251,396 250,480" fill="none" stroke="#1f5aa0" stroke-width="0.6" vector-effect="non-scaling-stroke" /><path d="M277,301 Q271,395 270,488" fill="none" stroke="#3d8fd0" stroke-width="0.9" vector-effect="non-scaling-stroke" /><path d="M292,292 Q286,394 283,495" fill="none" stroke="#1f5aa0" stroke-width="1.2" vector-effect="non-scaling-stroke" /><path d="M306,276 Q300,379 304,482" fill="none" stroke="#3d8fd0" stroke-width="0.6" vector-effect="non-scaling-stroke" /><path d="M328,281 Q322,395 318,509" fill="none" stroke="#1f5aa0" stroke-width="0.9" vector-effect="non-scaling-stroke" /><path d="M341,278 Q335,394 334,510" fill="none" stroke="#0d2a5c" stroke-width="0.9" vector-effect="non-scaling-stroke" /><path d="M358,261 Q352,377 352,493" fill="none" stroke="#1f5aa0" stroke-width="0.6" vector-effect="non-scaling-stroke" /><path d="M370,259 Q364,390 369,520" fill="none" stroke="#0d2a5c" stroke-width="0.9" vector-effect="non-scaling-stroke" /><path d="M392,246 Q386,380 388,513" fill="none" stroke="#2c6cb4" stroke-width="0.6" vector-effect="non-scaling-stroke" /><path d="M408,254 Q402,377 410,500" fill="none" stroke="#5aa5dc" stroke-width="0.9" vector-effect="non-scaling-stroke" /><path d="M424,246 Q418,375 425,505" fill="none" stroke="#2c6cb4" stroke-width="0.9" vector-effect="non-scaling-stroke" /><path d="M442,259 Q436,380 447,502" fill="none" stroke="#1f5aa0" stroke-width="0.9" vector-effect="non-scaling-stroke" /><path d="M456,243 Q450,379 457,515" fill="none" stroke="#1f5aa0" stroke-width="0.9" vector-effect="non-scaling-stroke" /><path d="M469,252 Q463,387 465,522" fill="none" stroke="#0d2a5c" stroke-width="1.2" vector-effect="non-scaling-stroke" /><path d="M490,250 Q484,379 485,509" fill="none" stroke="#5aa5dc" stroke-width="0.9" vector-effect="non-scaling-stroke" /><path d="M505,280 Q499,389 500,498" fill="none" stroke="#2c6cb4" stroke-width="0.9" vector-effect="non-scaling-stroke" /><path d="M519,279 Q513,387 518,495" fill="none" stroke="#1f5aa0" stroke-width="0.9" vector-effect="non-scaling-stroke" /><path d="M542,276 Q536,380 533,485" fill="none" stroke="#2c6cb4" stroke-width="1.2" vector-effect="non-scaling-stroke" /><path d="M552,288 Q546,384 551,480" fill="none" stroke="#2c6cb4" stroke-width="1.2" vector-effect="non-scaling-stroke" /><path d="M569,305 Q563,389 564,473" fill="none" stroke="#0d2a5c" stroke-width="0.9" vector-effect="non-scaling-stroke" /><path d="M589,292 Q583,380 586,468" fill="none" stroke="#5aa5dc" stroke-width="0.6" vector-effect="non-scaling-stroke" /><path d="M602,307 Q596,391 606,475" fill="none" stroke="#5aa5dc" stroke-width="0.9" vector-effect="non-scaling-stroke" /><path d="M619,305 Q613,380 612,456" fill="none" stroke="#0d2a5c" stroke-width="0.6" vector-effect="non-scaling-stroke" /><path d="M637,324 Q631,386 636,448" fill="none" stroke="#1f5aa0" stroke-width="1.2" vector-effect="non-scaling-stroke" /><path d="M168,330 Q140,380 172,440 Q190,500 250,520 L228,545 Q185,520 170,470 Q135,400 168,330 Z" fill="#2f7fc0" stroke="#141414" stroke-width="0.4" vector-effect="non-scaling-stroke" /><path d="M662,330 Q690,380 668,430 Q650,480 610,500 L600,472 Q650,450 662,400 Z" fill="#2f7fc0" stroke="#141414" stroke-width="0.4" vector-effect="non-scaling-stroke" /><path d="M130,330 Q150,400 175,450 M205,500 L215,560 M655,300 L668,260 M650,470 L640,520" fill="none" stroke="#4a80c0" stroke-width="0.6" vector-effect="non-scaling-stroke" /></g></g><g clip-path="url(#vpl)"><polygon points="272.2,326.6 321.1,302.2 325.2,310.6 277.9,340.8" fill="#8a8c90" stroke="#141414" stroke-width="0.8" stroke-linejoin="round" />
<polygon points="272.2,326.6 321.1,302.2 322.0,304.5 273.3,329.4" fill="#d0d1d4" stroke="#141414" stroke-width="0" stroke-linejoin="round" />
<polygon points="274.0,331.6 321.6,306.7 323.8,310.2 277.6,338.7" fill="#2a2b2f" stroke="#141414" stroke-width="0" stroke-linejoin="round" />
<polygon points="286.4,333.3 322.9,310.2 324.7,311.6 290.0,336.0" fill="#2c2f96" stroke="#141414" stroke-width="0" stroke-linejoin="round" />
<polygon points="321.1,302.2 329.1,297.8 336.2,290.7 340.7,288.0 341.9,292.4 338.0,298.7 334.4,303.5 332.3,313.8 325.2,311.3" fill="#a9abaf" stroke="#141414" stroke-width="0.8" stroke-linejoin="round" />
<polygon points="229.6,386.7 234.9,368.9 240.2,354.7 247.3,338.7 252.7,331.6 262.4,333.3 265.5,344.0 261.6,356.4 258.0,365.3 250.9,379.6 243.8,386.7" fill="#23268a" stroke="#141414" stroke-width="0.8" stroke-linejoin="round" />
<polygon points="229.6,386.7 234.9,368.9 240.2,354.7 247.3,338.7 252.7,331.6 254.4,333.3 247.3,351.1 240.2,372.4 236.7,386.7" fill="#1f2272" stroke="#141414" stroke-width="0" stroke-linejoin="round" />
<polygon points="243.8,351.1 247.3,343.1 261.9,346.8 260.1,354.0" fill="#c41a1c" stroke="#141414" stroke-width="0.4" stroke-linejoin="round" />
<polygon points="261.6,329.8 270.4,325.9 273.1,326.6 277.9,340.4 267.2,345.1 264.2,338.7" fill="#c41a1c" stroke="#141414" stroke-width="0.5" stroke-linejoin="round" />
<polygon points="268.7,331.6 274.9,331.6 276.7,338.7 270.4,341.3" fill="#d9dadc" stroke="#141414" stroke-width="0.3" stroke-linejoin="round" />
<polygon points="226.9,392.4 228.1,384.9 236.7,379.6 245.6,384.9 254.4,395.6 253.0,411.6 243.8,419.0 229.6,420.8 226.0,415.5" fill="#3a3ca8" stroke="#141414" stroke-width="0.8" stroke-linejoin="round" />
<polygon points="229.6,415.1 243.8,415.1 252.7,408.0 253.0,411.6 243.8,419.0 229.6,420.8" fill="#1f2272" stroke="#141414" stroke-width="0" stroke-linejoin="round" />
<polygon points="240.2,381.7 254.4,372.4 265.1,366.4 270.4,364.4 277.6,367.1 279.0,371.0 272.6,383.5 259.8,395.9 247.7,394.1 241.1,388.8" fill="#a6a8ac" stroke="#141414" stroke-width="0.8" stroke-linejoin="round" />
<polygon points="243.8,384.0 258.0,376.0 261.6,388.4 252.7,393.8 245.6,391.1" fill="#d0d1d4" stroke="#141414" stroke-width="0.3" stroke-linejoin="round" />
<polygon points="241.1,383.1 243.8,381.7 254.4,395.6 250.9,396.4" fill="#c41a1c" stroke="#141414" stroke-width="0.3" stroke-linejoin="round" />
<polygon points="263.3,367.1 270.4,364.4 277.6,367.1 279.0,371.0 272.2,374.2 266.9,372.4" fill="#7e8084" stroke="#141414" stroke-width="0.4" stroke-linejoin="round" />
<polygon points="272.2,372.8 281.1,370.7 307.8,386.7 339.8,407.1 350.4,407.1 338.4,417.2 314.9,406.6 286.4,394.1 274.0,383.5" fill="#a9abaf" stroke="#141414" stroke-width="0.8" stroke-linejoin="round" />
<polygon points="281.1,372.4 286.4,372.8 341.6,406.6 338.9,408.9" fill="#c41a1c" stroke="#141414" stroke-width="0.3" stroke-linejoin="round" />
<polygon points="314.9,404.8 334.4,412.4 337.1,416.0 314.9,407.1" fill="#c41a1c" stroke="#141414" stroke-width="0.3" stroke-linejoin="round" />
<polygon points="275.8,379.6 314.9,404.4 314.9,406.6 286.4,394.1 274.9,384.0" fill="#77797d" stroke="#141414" stroke-width="0" stroke-linejoin="round" />
<polygon points="338.4,408.4 348.7,405.3 357.9,402.0 356.1,408.4 341.9,420.8 336.6,424.4 333.7,418.0" fill="#a3a5a9" stroke="#141414" stroke-width="0.8" stroke-linejoin="round" />
<polygon points="334.4,418.7 339.8,416.9 340.7,421.3 336.6,424.4" fill="#c41a1c" stroke="#141414" stroke-width="0.3" stroke-linejoin="round" />
<g transform="translate(130,330) scale(0.106667)" stroke-linejoin="round"><path d="M560,610 L600,590 L690,545 L790,555 L905,588 L905,800 L740,742 L560,672 Z" fill="#2f3298" stroke="#141414" stroke-width="0.7" vector-effect="non-scaling-stroke" /><path d="M580,430 L640,414 L760,440 L792,500 L772,542 L690,546 L600,600 L560,612 L560,520 Z" fill="#4547b8" stroke="#141414" stroke-width="0.7" vector-effect="non-scaling-stroke" /><path d="M640,415 Q720,420 760,440 L790,500 Q740,470 700,470 Z" fill="#6a6cd2" stroke="#141414" stroke-width="0" vector-effect="non-scaling-stroke" /><path d="M585,430 L690,520 L622,547 L578,500 Z" fill="#c41a1c" stroke="#141414" stroke-width="0.4" vector-effect="non-scaling-stroke" /><path d="M620,470 L650,490 L640,500 Z" fill="#f0d0d0" stroke="#141414" stroke-width="0" vector-effect="non-scaling-stroke" /><path d="M590,560 L640,600 L600,640 Z" fill="#eadbc0" stroke="#141414" stroke-width="0.3" vector-effect="non-scaling-stroke" /><path d="M600,650 Q680,610 740,545 L760,560 Q700,640 620,690 Z" fill="#8a8c90" stroke="#141414" stroke-width="0.4" vector-effect="non-scaling-stroke" /><path d="M610,665 Q690,625 750,555" fill="none" stroke="#dcdde0" stroke-width="0.8" vector-effect="non-scaling-stroke" /><path d="M740,670 L810,690 L800,715 L745,700 Z" fill="#eadbc0" stroke="#141414" stroke-width="0.3" vector-effect="non-scaling-stroke" /><path d="M800,640 L840,610 L850,700 L810,745 Z" fill="#b9bbbf" stroke="#141414" stroke-width="0.4" vector-effect="non-scaling-stroke" /><path d="M850,612 L900,600 L900,792 L852,772 Z" fill="#c41a1c" stroke="#141414" stroke-width="0.5" vector-effect="non-scaling-stroke" /><path d="M858,665 L892,660 L892,720 L858,722 Z" fill="#ee9a98" stroke="#141414" stroke-width="0" vector-effect="non-scaling-stroke" /><path d="M395,480 L440,470 L560,408 L592,520 L562,600 L532,682 L470,642 L400,572 Z" fill="#6e7074" stroke="#141414" stroke-width="0.7" vector-effect="non-scaling-stroke" /><path d="M400,560 Q470,600 535,660 M410,540 Q480,575 548,630 M420,520 Q490,550 558,600" fill="none" stroke="#f0f0f2" stroke-width="1.4" vector-effect="non-scaling-stroke" /><path d="M480,570 L520,560 L530,590 L495,600 Z" fill="#c41a1c" stroke="#141414" stroke-width="0" vector-effect="non-scaling-stroke" /><path d="M350,440 L400,388 L445,420 L440,472 L395,482 Z" fill="#55575b" stroke="#141414" stroke-width="0.5" vector-effect="non-scaling-stroke" /><path d="M395,400 L440,420 M385,415 L438,440 M375,430 L436,458" fill="none" stroke="#e6e6e8" stroke-width="1.0" vector-effect="non-scaling-stroke" /><path d="M665,30 L742,50 Q780,120 792,200 L802,330 L772,402 L700,342 L690,200 Z" fill="#6e7074" stroke="#141414" stroke-width="0.7" vector-effect="non-scaling-stroke" /><path d="M690,60 L725,70 L760,200 L765,320 L730,330 L715,200 Z" fill="#a9abaf" stroke="#141414" stroke-width="0" vector-effect="non-scaling-stroke" /><path d="M748,180 L790,200 L800,320 L762,300 Z" fill="#1d2070" stroke="#141414" stroke-width="0.3" vector-effect="non-scaling-stroke" /><path d="M690,350 L772,358 L792,420 L722,402 Z" fill="#c41a1c" stroke="#141414" stroke-width="0.4" vector-effect="non-scaling-stroke" /><path d="M700,330 L770,345 L775,362 L695,352 Z" fill="#c9cbce" stroke="#141414" stroke-width="0.3" vector-effect="non-scaling-stroke" /><path d="M490,100 L540,-10 L588,-108 L668,-100 L650,-10 L622,110 L612,190 L500,170 Z" fill="#8a8c90" stroke="#141414" stroke-width="0.7" vector-effect="non-scaling-stroke" /><path d="M520,30 L560,40 L545,110 L510,100 Z" fill="#2a2b2f" stroke="#141414" stroke-width="0.3" vector-effect="non-scaling-stroke" /><path d="M560,0 L610,-95 L640,-92 L600,0 L570,160 L540,155 Z" fill="#d0d1d4" stroke="#141414" stroke-width="0" vector-effect="non-scaling-stroke" /><path d="M500,170 L612,190 L592,270 L480,246 Z" fill="#9a9ca0" stroke="#141414" stroke-width="0.5" vector-effect="non-scaling-stroke" /><path d="M490,200 L605,225 M486,225 L598,250" fill="none" stroke="#e8e8ea" stroke-width="1.0" vector-effect="non-scaling-stroke" /><path d="M480,246 L592,270 L546,400 L502,482 L440,474 L470,380 L490,290 Z" fill="#c41a1c" stroke="#141414" stroke-width="0.6" vector-effect="non-scaling-stroke" /><path d="M500,250 L535,258 L470,440 L448,470 L440,474 L470,380 Z" fill="#e4e4e6" stroke="#141414" stroke-width="0" vector-effect="non-scaling-stroke" /><path d="M445,380 L470,385 L455,440 L430,436 Z" fill="#17181a" stroke="" stroke-width="0" vector-effect="non-scaling-stroke" /><path d="M345,175 L386,150 L425,200 L472,250 L462,312 L412,340 L402,386 L340,382 L250,336 L300,300 L325,250 Z" fill="#e9cdbf" stroke="#141414" stroke-width="0.6" vector-effect="non-scaling-stroke" /><path d="M385,260 L460,255 L462,312 L412,340 L380,320 Z" fill="#c7b5e6" stroke="#141414" stroke-width="0" vector-effect="non-scaling-stroke" /><path d="M330,250 L380,285 L385,330 L340,300 Z" fill="#d9b0b8" stroke="#141414" stroke-width="0" vector-effect="non-scaling-stroke" /><path d="M395,235 L415,230 L420,250 L400,255 Z" fill="#f4f6ff" stroke="#141414" stroke-width="0.3" vector-effect="non-scaling-stroke" /><path d="M325,290 Q360,310 385,300" fill="none" stroke="#2a2b40" stroke-width="0.9" vector-effect="non-scaling-stroke" /><path d="M250,336 Q300,300 340,330 Q330,360 300,372 Z" fill="#dba9a4" stroke="#141414" stroke-width="0.3" vector-effect="non-scaling-stroke" /><path d="M95,300 L100,232 L160,150 L200,140 L215,250 L245,330 L340,382 L396,386 L346,442 L290,430 L200,402 L150,372 L140,322 Z" fill="#b3191c" stroke="#141414" stroke-width="0.8" vector-effect="non-scaling-stroke" /><path d="M95,300 L100,232 L160,150 L170,165 L125,240 L125,300 L165,340 L160,372 L150,372 L140,322 Z" fill="#b9bbbf" stroke="#141414" stroke-width="0.4" vector-effect="non-scaling-stroke" /><path d="M150,205 L212,190 L226,262 L168,268 Z" fill="#3a1012" stroke="#141414" stroke-width="0.4" vector-effect="non-scaling-stroke" /><path d="M165,215 L205,208 M170,235 L212,228 M175,252 L216,246 M180,200 L192,265 M196,197 L208,262" fill="none" stroke="#8a2a2c" stroke-width="0.6" vector-effect="non-scaling-stroke" /><path d="M200,402 L215,345 L340,390 L396,386 L346,442 L290,430 Z" fill="#c41a1c" stroke="#141414" stroke-width="0.5" vector-effect="non-scaling-stroke" /><path d="M235,370 L330,400 L325,415 L232,385 Z" fill="#1a1b1e" stroke="#141414" stroke-width="0" vector-effect="non-scaling-stroke" /><path d="M150,372 L200,402 L290,430 L346,442 L340,452 L280,442 L190,415 L150,388 Z" fill="#d8d9dc" stroke="#141414" stroke-width="0.4" vector-effect="non-scaling-stroke" /><path d="M185,132 Q220,80 270,70 Q330,62 362,82 L396,130 L372,160 L342,190 L322,250 L292,300 L246,322 L215,250 L200,170 Z" fill="#1c4c94" stroke="#141414" stroke-width="0.6" vector-effect="non-scaling-stroke" /><path d="M215,140 Q260,95 330,90 L370,130 L330,180 L300,260 L255,300 L228,240 Z" fill="#153a78" stroke="#141414" stroke-width="0" vector-effect="non-scaling-stroke" /><path d="M200,150 Q250,100 330,85 M210,180 Q260,130 350,110 M225,215 Q270,170 360,140 M235,255 Q275,215 335,190 M245,290 Q285,255 318,245" fill="none" stroke="#3f86c6" stroke-width="0.8" vector-effect="non-scaling-stroke" /></g>
<polygon points="191.3,296.9 192.6,290.7 194.4,296.9 196.1,289.8 197.6,296.9 199.7,291.6 200.8,301.3 200.2,312.0 198.4,318.2 192.6,317.7 190.4,306.7" fill="#9a9ca0" stroke="#141414" stroke-width="0.8" stroke-linejoin="round" />
<polygon points="192.2,304.9 198.4,303.1 199.7,312.0 198.4,317.7 193.1,316.4" fill="#c41a1c" stroke="#141414" stroke-width="0.3" stroke-linejoin="round" />
<polygon points="201.1,321.8 203.2,314.7 204.7,321.8 207.5,313.8 208.2,321.8 212.1,315.6 212.8,324.4 210.9,331.6 208.2,334.2 201.1,332.4 199.7,326.2" fill="#9a9ca0" stroke="#141414" stroke-width="0.8" stroke-linejoin="round" />
<polygon points="200.8,325.3 210.9,324.4 210.4,331.6 202.0,331.9" fill="#c41a1c" stroke="#141414" stroke-width="0.3" stroke-linejoin="round" />
<polygon points="192.6,317.7 198.4,318.2 201.1,320.2 192.6,319.5" fill="#6e7074" stroke="#141414" stroke-width="0.4" stroke-linejoin="round" /></g>
</svg>
<svg width="1500" height="844" viewBox="0 0 1500 844">
<path d="M1348.8,24 H1371.8" stroke="#111" stroke-width="2"/>
<rect x="1406.2" y="11.2" width="20.6" height="17.2" fill="none" stroke="#111" stroke-width="2"/>
<path d="M1464.6,10.6 L1481.8,27.6 M1481.8,10.6 L1464.6,27.6" stroke="#111" stroke-width="2"/>
<g transform="translate(30.3,24.4) rotate(-36) scale(1)"><rect x="-17.7" y="-5.3999999999999995" width="35.4" height="2.6" rx="0.8" fill="#fdd55e" stroke="#e2b848" stroke-width="0.5"/><rect x="-17.7" y="-1.3" width="35.4" height="2.6" rx="0.8" fill="#fdd55e" stroke="#e2b848" stroke-width="0.5"/><rect x="-17.7" y="2.8" width="35.4" height="2.6" rx="0.8" fill="#fdd55e" stroke="#e2b848" stroke-width="0.5"/><circle r="10.8" fill="#fdd55e" stroke="#e2b848" stroke-width="0.5"/><circle r="7.1" fill="#dedede"/><circle r="3.0" fill="#1c10b4"/></g>
<g transform="translate(30.3,62.85) rotate(-36) scale(0.93)"><rect x="-17.7" y="-5.3999999999999995" width="35.4" height="2.6" rx="0.8" fill="#8b8b8b"/><rect x="-17.7" y="-1.3" width="35.4" height="2.6" rx="0.8" fill="#8b8b8b"/><rect x="-17.7" y="2.8" width="35.4" height="2.6" rx="0.8" fill="#8b8b8b"/><circle r="10.8" fill="#8b8b8b"/><circle r="7.1" fill="#555555"/><circle r="3.0" fill="#8c8c90"/></g>
<g transform="translate(682.5,810.8) rotate(-36) scale(1)"><rect x="-17.7" y="-5.3999999999999995" width="35.4" height="2.6" rx="0.8" fill="#fdd55e" stroke="#e2b848" stroke-width="0.5"/><rect x="-17.7" y="-1.3" width="35.4" height="2.6" rx="0.8" fill="#fdd55e" stroke="#e2b848" stroke-width="0.5"/><rect x="-17.7" y="2.8" width="35.4" height="2.6" rx="0.8" fill="#fdd55e" stroke="#e2b848" stroke-width="0.5"/><circle r="10.8" fill="#fdd55e" stroke="#e2b848" stroke-width="0.5"/><circle r="7.1" fill="#dedede"/><circle r="3.0" fill="#1c10b4"/></g>
<path d="M1440.4,56.4 L1454,70 M1454,56.4 L1440.4,70" stroke="#5a5a5a" stroke-width="1.8"/>
<circle cx="7.6000000000000005" cy="98.0" r="4.6" fill="none" stroke="#c6c6c6" stroke-width="1.2"/><polygon points="18.80,91.70 17.07,95.87 12.90,97.60 8.73,95.87 7.00,91.70 8.73,87.53 12.90,85.80 17.07,87.53" fill="#c6c6c6"/>
<path d="M33.7,94.74 L36.5,97.54 L39.3,94.74" fill="none" stroke="#d8d8d8" stroke-width="1.4" stroke-linecap="round" stroke-linejoin="round"/>
<polygon points="84.40,94.80 82.06,100.46 76.40,102.80 70.74,100.46 68.40,94.80 70.74,89.14 76.40,86.80 82.06,89.14" fill="none" stroke="#c6c6c6" stroke-width="1.2"/><circle cx="77.60000000000001" cy="95.3" r="5.6" fill="none" stroke="#c6c6c6" stroke-width="1.1"/><polygon points="113.30,94.80 110.87,100.67 105.00,103.10 99.13,100.67 96.70,94.80 99.13,88.93 105.00,86.50 110.87,88.93" fill="#c6c6c6"/><polygon points="141.00,94.80 138.66,100.46 133.00,102.80 127.34,100.46 125.00,94.80 127.34,89.14 133.00,86.80 138.66,89.14" fill="none" stroke="#c6c6c6" stroke-width="1.2"/><path d="M133,94.8 L133,87.8 A7,7 0 1 1 126,94.8 Z" fill="#c6c6c6"/><polygon points="168.30,94.80 165.87,100.67 160.00,103.10 154.13,100.67 151.70,94.80 154.13,88.93 160.00,86.50 165.87,88.93" fill="none" stroke="#c6c6c6" stroke-width="1.2"/><circle cx="160" cy="94.8" r="5.6" fill="none" stroke="#c6c6c6" stroke-width="1"/><path d="M156.8,93.8 A3.4,3.4 0 0 1 162.6,92.6" fill="none" stroke="#c6c6c6" stroke-width="1.3"/><path d="M157.5,97.39999999999999 A4,4 0 0 0 163.6,94.3" fill="none" stroke="#c6c6c6" stroke-width="2.4" stroke-dasharray="0.7 0.7"/>
<path d="M185.2,94.74 L188,97.54 L190.8,94.74" fill="none" stroke="#d8d8d8" stroke-width="1.4" stroke-linecap="round" stroke-linejoin="round"/>
<path d="M874.2,88 V100.5 H887 M874.2,100.5 L883.5,91.5 M872.8,89.6 L874.2,87.4 L875.6,89.6 M885.4,99.1 L887.6,100.5 L885.4,101.9" fill="none" stroke="#d0d0d0" stroke-width="1.2"/><circle cx="874.5" cy="100.5" r="1.8" fill="#1a1a1a" stroke="#d0d0d0" stroke-width="1"/>
<path d="M947.2,94.03999999999999 L950,96.84 L952.8,94.03999999999999" fill="none" stroke="#d8d8d8" stroke-width="1.4" stroke-linecap="round" stroke-linejoin="round"/>
<circle cx="982" cy="98" r="5" fill="none" stroke="#c6c6c6" stroke-width="1.2"/><circle cx="986.5" cy="92.5" r="5.2" fill="none" stroke="#c6c6c6" stroke-width="1.2"/><circle cx="984.5" cy="95" r="2.2" fill="#9a9a9a"/>
<path d="M993.7,94.965 L996,97.265 L998.3,94.965" fill="none" stroke="#d8d8d8" stroke-width="1.4" stroke-linecap="round" stroke-linejoin="round"/>
<path d="M1011.5,91.8 a3.4,3.4 0 0 1 1.2,6.6" fill="none" stroke="#b8b8b8" stroke-width="1.6"/>
<rect x="1028.3" y="89" width="5.2" height="5.2" fill="#d8d8d8"/>
<rect x="1028.3" y="96.6" width="5.2" height="5.2" fill="#d8d8d8"/>
<rect x="1035.8999999999999" y="89" width="5.2" height="5.2" fill="#d8d8d8"/>
<rect x="1035.8999999999999" y="96.6" width="5.2" height="5.2" fill="#d8d8d8"/>
<path d="M1046.7,94.74 L1049.5,97.54 L1052.3,94.74" fill="none" stroke="#d8d8d8" stroke-width="1.4" stroke-linecap="round" stroke-linejoin="round"/>
<circle cx="1073" cy="95" r="6.6" fill="none" stroke="#b4b4b4" stroke-width="1.2"/><circle cx="1073" cy="95" r="1.9" fill="#b4b4b4"/>
<path d="M1086,100.5 h2.2 c2.6,0 2.4,-11.5 5.6,-11.5 c3.2,0 3,11.5 5.6,11.5 h2.2" fill="none" stroke="#d8d8d8" stroke-width="1.2"/>
<path d="M1105.7,94.74 L1108.5,97.54 L1111.3,94.74" fill="none" stroke="#d8d8d8" stroke-width="1.4" stroke-linecap="round" stroke-linejoin="round"/>
<path d="M1262,92.5 c4,-1 7,1.5 6.5,9 M1272.5,88.5 c-2,4 -5,7 -8,9" fill="none" stroke="#9fb4e6" stroke-width="1.1"/><circle cx="1264" cy="99.3" r="1.7" fill="none" stroke="#9fb4e6" stroke-width="1"/>
<path d="M1292.2,94.74 L1295,97.54 L1297.8,94.74" fill="none" stroke="#d8d8d8" stroke-width="1.4" stroke-linecap="round" stroke-linejoin="round"/>
<circle cx="1329.9" cy="98.3" r="4.6" fill="none" stroke="#c6c6c6" stroke-width="1.2"/><polygon points="1341.10,92.00 1339.37,96.17 1335.20,97.90 1331.03,96.17 1329.30,92.00 1331.03,87.83 1335.20,86.10 1339.37,87.83" fill="#c6c6c6"/>
<path d="M1357.2,94.74 L1360,97.54 L1362.8,94.74" fill="none" stroke="#d8d8d8" stroke-width="1.4" stroke-linecap="round" stroke-linejoin="round"/>
<polygon points="1406.60,94.90 1404.26,100.56 1398.60,102.90 1392.94,100.56 1390.60,94.90 1392.94,89.24 1398.60,86.90 1404.26,89.24" fill="none" stroke="#c6c6c6" stroke-width="1.2"/><circle cx="1399.8" cy="95.4" r="5.6" fill="none" stroke="#c6c6c6" stroke-width="1.1"/><polygon points="1436.10,94.90 1433.67,100.77 1427.80,103.20 1421.93,100.77 1419.50,94.90 1421.93,89.03 1427.80,86.60 1433.67,89.03" fill="#c6c6c6"/><polygon points="1463.20,94.90 1460.86,100.56 1455.20,102.90 1449.54,100.56 1447.20,94.90 1449.54,89.24 1455.20,86.90 1460.86,89.24" fill="none" stroke="#c6c6c6" stroke-width="1.2"/><path d="M1455.2,94.9 L1455.2,87.9 A7,7 0 1 1 1448.2,94.9 Z" fill="#c6c6c6"/><polygon points="1490.70,94.90 1488.27,100.77 1482.40,103.20 1476.53,100.77 1474.10,94.90 1476.53,89.03 1482.40,86.60 1488.27,89.03" fill="none" stroke="#c6c6c6" stroke-width="1.2"/><circle cx="1482.4" cy="94.9" r="5.6" fill="none" stroke="#c6c6c6" stroke-width="1"/><path d="M1479.2,93.9 A3.4,3.4 0 0 1 1485.0,92.7" fill="none" stroke="#c6c6c6" stroke-width="1.3"/><path d="M1479.9,97.5 A4,4 0 0 0 1486.0,94.4" fill="none" stroke="#c6c6c6" stroke-width="2.4" stroke-dasharray="0.7 0.7"/>
<rect x="35.2" y="113.2" width="23.5" height="21.6" fill="none" stroke="#cf8a35" stroke-width="1.5"/>
<rect x="69.2" y="120.5" width="16.6" height="15" fill="#c6c6c6"/><rect x="77" y="112.5" width="16.4" height="15.4" fill="#c6c6c6"/>
<rect x="102.3" y="122.4" width="12.9" height="11.8" fill="none" stroke="#cf8a35" stroke-width="1.4"/><rect x="110.7" y="112.5" width="16.2" height="15.4" fill="#c6c6c6"/>
<rect x="139.3" y="122.4" width="12.5" height="12.1" fill="none" stroke="#cf8a35" stroke-width="1.4"/><rect x="145.9" y="113.6" width="15.2" height="13.6" fill="none" stroke="#cf8a35" stroke-width="1.4"/>
<path d="M1338.3,131.2 h8 l-4,6.6 z" fill="#e6e6e6"/>
<rect x="1457.3" y="173.2" width="9.6" height="6" rx="0.8" fill="none" stroke="#dcdcdc" stroke-width="1.2"/><path d="M1459.5,173.2 v-1.6 a2.6,2.6 0 0 1 5.2,0 v1.6" fill="none" stroke="#dcdcdc" stroke-width="1.2"/><rect x="1461.3" y="175.6" width="1.6" height="1.6" fill="#dcdcdc"/>
<rect x="1457.3" y="188.2" width="9.6" height="6" rx="0.8" fill="none" stroke="#dcdcdc" stroke-width="1.2"/><path d="M1459.5,188.2 v-1.6 a2.6,2.6 0 0 1 5.2,0 v1.6" fill="none" stroke="#dcdcdc" stroke-width="1.2"/><rect x="1461.3" y="190.6" width="1.6" height="1.6" fill="#dcdcdc"/>
<rect x="1457.3" y="203.2" width="9.6" height="6" rx="0.8" fill="none" stroke="#dcdcdc" stroke-width="1.2"/><path d="M1459.5,203.2 v-1.6 a2.6,2.6 0 0 1 5.2,0 v1.6" fill="none" stroke="#dcdcdc" stroke-width="1.2"/><rect x="1461.3" y="205.6" width="1.6" height="1.6" fill="#dcdcdc"/>
<rect x="1457.3" y="239.79999999999998" width="9.6" height="6" rx="0.8" fill="none" stroke="#dcdcdc" stroke-width="1.2"/><path d="M1459.5,239.79999999999998 v-1.6 a2.6,2.6 0 0 1 5.2,0 v1.6" fill="none" stroke="#dcdcdc" stroke-width="1.2"/><rect x="1461.3" y="242.2" width="1.6" height="1.6" fill="#dcdcdc"/>
<rect x="1457.3" y="254.79999999999998" width="9.6" height="6" rx="0.8" fill="none" stroke="#dcdcdc" stroke-width="1.2"/><path d="M1459.5,254.79999999999998 v-1.6 a2.6,2.6 0 0 1 5.2,0 v1.6" fill="none" stroke="#dcdcdc" stroke-width="1.2"/><rect x="1461.3" y="257.2" width="1.6" height="1.6" fill="#dcdcdc"/>
<rect x="1457.3" y="269.8" width="9.6" height="6" rx="0.8" fill="none" stroke="#dcdcdc" stroke-width="1.2"/><path d="M1459.5,269.8 v-1.6 a2.6,2.6 0 0 1 5.2,0 v1.6" fill="none" stroke="#dcdcdc" stroke-width="1.2"/><rect x="1461.3" y="272.2" width="1.6" height="1.6" fill="#dcdcdc"/>
<rect x="1457.3" y="307.59999999999997" width="9.6" height="6" rx="0.8" fill="none" stroke="#dcdcdc" stroke-width="1.2"/><path d="M1459.5,307.59999999999997 v-1.6 a2.6,2.6 0 0 1 5.2,0 v1.6" fill="none" stroke="#dcdcdc" stroke-width="1.2"/><rect x="1461.3" y="309.99999999999994" width="1.6" height="1.6" fill="#dcdcdc"/>
<rect x="1457.3" y="322.59999999999997" width="9.6" height="6" rx="0.8" fill="none" stroke="#dcdcdc" stroke-width="1.2"/><path d="M1459.5,322.59999999999997 v-1.6 a2.6,2.6 0 0 1 5.2,0 v1.6" fill="none" stroke="#dcdcdc" stroke-width="1.2"/><rect x="1461.3" y="324.99999999999994" width="1.6" height="1.6" fill="#dcdcdc"/>
<rect x="1457.3" y="337.59999999999997" width="9.6" height="6" rx="0.8" fill="none" stroke="#dcdcdc" stroke-width="1.2"/><path d="M1459.5,337.59999999999997 v-1.6 a2.6,2.6 0 0 1 5.2,0 v1.6" fill="none" stroke="#dcdcdc" stroke-width="1.2"/><rect x="1461.3" y="339.99999999999994" width="1.6" height="1.6" fill="#dcdcdc"/>
<circle cx="658.3" cy="654.2" r="5.6" fill="#cfcfcf"/>
<path d="M674.3000000000001,653.965 L676.6,656.265 L678.9,653.965" fill="none" stroke="#bdbdbd" stroke-width="1.1" stroke-linecap="round" stroke-linejoin="round"/>
<rect x="699.3500000000001" y="649.6999999999999" width="1.6" height="9.2" fill="#cfcfcf"/><path d="M708.3500000000001,649.5 v9.6 l-6.4,-4.8z" fill="#cfcfcf"/>
<path d="M715.7900000000001,654.3 l3.8,-4 l3.8,4 l-3.8,4z M729.3900000000001,650.0999999999999 v8.4 l-5.4,-4.2z" fill="#cfcfcf"/>
<path d="M746.0300000000001,647.9 v12.8 l-9.4,-6.4z" fill="#cfcfcf"/>
<path d="M755.6700000000001,647.9 v12.8 l9.4,-6.4z" fill="#cfcfcf"/>
<path d="M785.71,654.3 l-3.8,-4 l-3.8,4 l3.8,4z M772.11,650.0999999999999 v8.4 l5.4,-4.2z" fill="#cfcfcf"/>
<rect x="800.5500000000002" y="649.6999999999999" width="1.6" height="9.2" fill="#cfcfcf"/><path d="M793.1500000000001,649.5 v9.6 l6.4,-4.8z" fill="#cfcfcf"/>
<path d="M699,717.5 L699,738.2 L703.6,734.6 L707.4,744 L710.6,742.6 L706.8,733.6 L712.6,733.2 Z" fill="#dcdcdc" stroke="#3a3a3a" stroke-width="0.5"/>
<path d="M22.7,801 L32.7,799.6 V811.3 H22.7z M35.3,799.1 L45.7,796.3 V811.3 H35.3z M22.7,813.7 H32.7 V825.3 L22.7,823.3z M35.3,813.7 H45.7 V829 L35.3,826z" fill="#37378e"/>
<path d="M203.3,799.7 l1,-1.3 h9 l2.2,3.6 h15.3 v18.8 h-27.5 z" fill="#c1a445"/><path d="M214.8,801.8000000000001 h16.2" stroke="#2c2a22" stroke-width="1.4"/><path d="M230.4,801.8000000000001 v18.6" stroke="#8b7a3a" stroke-width="0.9"/>
<path d="M433.3,799.7 l1,-1.3 h9 l2.2,3.6 h15.3 v18.8 h-27.5 z" fill="#c1a445"/><path d="M444.8,801.8000000000001 h16.2" stroke="#2c2a22" stroke-width="1.4"/><path d="M460.40000000000003,801.8000000000001 v18.6" stroke="#8b7a3a" stroke-width="0.9"/>
<path d="M1292.2,805 L1309.2,797.2 V824.7 L1292.2,817.5z" fill="#9b9648"/><path d="M1308.4,797.4 V824.5" stroke="#5f5c2c" stroke-width="1"/>
<rect x="1310.8" y="800" width="3" height="21.7" fill="#9b9648"/><rect x="1315.3" y="803" width="2.7" height="16" fill="#9b9648"/><rect x="1319.5" y="805" width="2.3" height="12" fill="#9b9648"/>
<path d="M1338,808 H1365 L1351.4,824.2z" fill="#b12222"/><path d="M1348.4,808 L1354.4,808 L1353,820.5 L1349.8,820.5z" fill="#8f8f8f"/><path d="M1346.3,798 H1356.3 L1353.4,812 H1349.3z" fill="#b12222"/>
</svg>
<span class="t" style="left:60.30px;top:11.12px;font-size:21px;color:#111;font-weight:400;transform:scaleX(1.0481);">Toxic.blend</span>
<span class="t" style="left:216.95px;top:11.32px;font-size:21px;color:#111;font-weight:400;transform:scaleX(1.0482);">[X:\Desktop\My Projects\Toxic.blend] - Blender Yello 3.2.7</span>
<span class="t" style="left:59.83px;top:52.52px;font-size:21px;color:#ececec;font-weight:400;transform:scaleX(0.9702);">File</span>
<span class="t" style="left:117.98px;top:52.52px;font-size:21px;color:#ececec;font-weight:400;transform:scaleX(1.0183);">Edit</span>
<span class="t" style="left:180.70px;top:52.52px;font-size:21px;color:#ececec;font-weight:400;transform:scaleX(1.0017);">Render</span>
<span class="t" style="left:276.70px;top:52.52px;font-size:21px;color:#ececec;font-weight:400;transform:scaleX(1.0857);">Window</span>
<span class="t" style="left:384.76px;top:52.52px;font-size:21px;color:#ececec;font-weight:400;transform:scaleX(1.0407);">Help</span>
<span class="t" style="left:462.07px;top:51.93px;font-size:23px;color:#858585;font-weight:400;transform:scaleX(0.9320);">Layout</span>
<span class="t" style="left:557.37px;top:51.93px;font-size:23px;color:#858585;font-weight:400;transform:scaleX(0.9285);">Modeling</span>
<span class="t" style="left:662.40px;top:51.93px;font-size:23px;color:#858585;font-weight:400;transform:scaleX(0.8985);">Sculpting</span>
<span class="t" style="left:765.76px;top:51.93px;font-size:23px;color:#858585;font-weight:400;transform:scaleX(0.9448);">UV Edit</span>
<span class="t" style="left:872.50px;top:51.93px;font-size:23px;color:#858585;font-weight:400;transform:scaleX(1.0250);">Texture</span>
<span class="t" style="left:980.84px;top:51.93px;font-size:23px;color:#858585;font-weight:400;transform:scaleX(0.8570);">Shading</span>
<span class="t" style="left:1107.50px;top:51.93px;font-size:23px;color:#858585;font-weight:400;transform:scaleX(0.9832);">AI</span>
<span class="t" style="left:1175.00px;top:51.93px;font-size:23px;color:#f2f2f2;font-weight:400;transform:scaleX(0.9489);">Animation</span>
<span class="t" style="left:1356.00px;top:57.05px;font-size:15.3px;color:#9c9c9c;font-weight:400;transform:scaleX(0.8880);">Scene.001</span>
<span class="t" style="left:1288.60px;top:51.97px;font-size:20px;color:#8c8c8c;font-weight:400;transform:scaleX(0.9818);">+</span>
<span class="t" style="left:453.00px;top:86.58px;font-size:15.5px;color:#e8e8e8;font-weight:400;transform:scaleX(1.0166);-webkit-text-stroke:0.25px #e8e8e8;">Object Mode</span>
<span class="t" style="left:578.90px;top:86.48px;font-size:15.5px;color:#e4e4e4;font-weight:400;transform:scaleX(0.9554);-webkit-text-stroke:0.25px #e4e4e4;">View</span>
<span class="t" style="left:630.40px;top:86.48px;font-size:15.5px;color:#e4e4e4;font-weight:400;transform:scaleX(0.9047);-webkit-text-stroke:0.25px #e4e4e4;">Select</span>
<span class="t" style="left:688.50px;top:86.48px;font-size:15.5px;color:#e4e4e4;font-weight:400;transform:scaleX(0.9904);-webkit-text-stroke:0.25px #e4e4e4;">Add</span>
<span class="t" style="left:730.00px;top:86.48px;font-size:15.5px;color:#e4e4e4;font-weight:400;transform:scaleX(1.0112);-webkit-text-stroke:0.25px #e4e4e4;">Object</span>
<span class="t" style="left:893.30px;top:86.48px;font-size:15.5px;color:#ececec;font-weight:400;transform:scaleX(0.9738);-webkit-text-stroke:0.45px #ececec;">Global</span>
<span class="t" style="left:1352.00px;top:126.54px;font-size:13.3px;color:#e8e8e8;font-weight:400;transform:scaleX(0.9915);">Transform</span>
<span class="t" style="left:1339.20px;top:152.44px;font-size:10px;color:#e0e0e0;font-weight:400;transform:scaleX(1.0350);">Location:</span>
<span class="t" style="left:1339.20px;top:218.13px;font-size:10px;color:#e0e0e0;font-weight:400;transform:scaleX(1.0498);">Rotation:</span>
<span class="t" style="left:1339.20px;top:285.04px;font-size:10px;color:#e0e0e0;font-weight:400;transform:scaleX(0.8995);">Scale:</span>
<span class="t" style="left:1347.00px;top:170.11px;font-size:10.5px;color:#e6e6e6;font-weight:400;transform:scaleX(0.9286);">X</span>
<span class="t" style="left:1404.40px;top:170.11px;font-size:10.5px;color:#e6e6e6;font-weight:400;transform:scaleX(0.9493);">91.616 m</span>
<span class="t" style="left:1347.00px;top:185.11px;font-size:10.5px;color:#e6e6e6;font-weight:400;transform:scaleX(0.9286);">Y</span>
<span class="t" style="left:1411.00px;top:185.11px;font-size:10.5px;color:#e6e6e6;font-weight:400;transform:scaleX(0.9216);">1.279 m</span>
<span class="t" style="left:1347.00px;top:200.11px;font-size:10.5px;color:#e6e6e6;font-weight:400;transform:scaleX(0.9286);">Z</span>
<span class="t" style="left:1411.00px;top:200.11px;font-size:10.5px;color:#e6e6e6;font-weight:400;transform:scaleX(0.9216);">1.188 m</span>
<span class="t" style="left:1347.00px;top:236.71px;font-size:10.5px;color:#e6e6e6;font-weight:400;transform:scaleX(0.9286);">X</span>
<span class="t" style="left:1432.00px;top:236.71px;font-size:10.5px;color:#e6e6e6;font-weight:400;transform:scaleX(1.0205);">0'</span>
<span class="t" style="left:1347.00px;top:251.71px;font-size:10.5px;color:#e6e6e6;font-weight:400;transform:scaleX(0.9286);">Y</span>
<span class="t" style="left:1432.00px;top:251.71px;font-size:10.5px;color:#e6e6e6;font-weight:400;transform:scaleX(1.0205);">0'</span>
<span class="t" style="left:1347.00px;top:266.71px;font-size:10.5px;color:#e6e6e6;font-weight:400;transform:scaleX(0.9286);">Z</span>
<span class="t" style="left:1432.00px;top:266.71px;font-size:10.5px;color:#e6e6e6;font-weight:400;transform:scaleX(1.0205);">0'</span>
<span class="t" style="left:1347.00px;top:304.51px;font-size:10.5px;color:#e6e6e6;font-weight:400;transform:scaleX(0.9286);">X</span>
<span class="t" style="left:1409.40px;top:304.51px;font-size:10.5px;color:#e6e6e6;font-weight:400;transform:scaleX(0.9419);">0.128</span>
<span class="t" style="left:1347.00px;top:319.51px;font-size:10.5px;color:#e6e6e6;font-weight:400;transform:scaleX(0.9286);">Y</span>
<span class="t" style="left:1409.40px;top:319.51px;font-size:10.5px;color:#e6e6e6;font-weight:400;transform:scaleX(0.9419);">0.018</span>
<span class="t" style="left:1347.00px;top:334.51px;font-size:10.5px;color:#e6e6e6;font-weight:400;transform:scaleX(0.9286);">Z</span>
<span class="t" style="left:1409.40px;top:334.51px;font-size:10.5px;color:#e6e6e6;font-weight:400;transform:scaleX(0.9419);">0.018</span>
<span class="t" style="left:9.70px;top:648.18px;font-size:11.6px;color:#121212;font-weight:400;transform:scaleX(0.9948);-webkit-text-stroke:0.3px #121212;">Playback</span>
<span class="t" style="left:80.50px;top:648.18px;font-size:11.6px;color:#121212;font-weight:400;transform:scaleX(1.0571);-webkit-text-stroke:0.3px #121212;">Keying</span>
<span class="t" style="left:148.80px;top:648.18px;font-size:11.6px;color:#e8e8e8;font-weight:400;transform:scaleX(1.0569);-webkit-text-stroke:0.3px #e8e8e8;">View</span>
<span class="t" style="left:188.00px;top:648.18px;font-size:11.6px;color:#e8e8e8;font-weight:400;transform:scaleX(1.1046);-webkit-text-stroke:0.3px #e8e8e8;">Marker</span>
<span class="t" style="left:1263.40px;top:648.44px;font-size:12px;color:#e8e8e8;font-weight:400;transform:scaleX(1.0343);">Start</span>
<span class="t" style="left:1330.30px;top:648.44px;font-size:12px;color:#f0f0f0;font-weight:400;transform:scaleX(0.5286);-webkit-text-stroke:0.3px #f0f0f0;">1</span>
<span class="t" style="left:1367.00px;top:648.44px;font-size:12px;color:#e8e8e8;font-weight:400;transform:scaleX(0.9672);">End</span>
<span class="t" style="left:1422.90px;top:648.44px;font-size:12px;color:#e8e8e8;font-weight:400;transform:scaleX(0.9733);">3795</span>
<span class="t" style="left:30.80px;top:670.87px;font-size:12.2px;color:#dcdcdc;font-weight:400;transform:scaleX(1.0286);">0</span>
<span class="t" style="left:77.45px;top:670.87px;font-size:12.2px;color:#dcdcdc;font-weight:400;transform:scaleX(0.9798);">10</span>
<span class="t" style="left:132.65px;top:670.87px;font-size:12.2px;color:#dcdcdc;font-weight:400;transform:scaleX(0.9798);">20</span>
<span class="t" style="left:184.95px;top:670.87px;font-size:12.2px;color:#dcdcdc;font-weight:400;transform:scaleX(0.9798);">30</span>
<span class="t" style="left:240.25px;top:670.87px;font-size:12.2px;color:#dcdcdc;font-weight:400;transform:scaleX(0.9798);">40</span>
<span class="t" style="left:293.25px;top:670.87px;font-size:12.2px;color:#dcdcdc;font-weight:400;transform:scaleX(0.9798);">50</span>
<span class="t" style="left:345.25px;top:670.87px;font-size:12.2px;color:#dcdcdc;font-weight:400;transform:scaleX(0.9798);">60</span>
<span class="t" style="left:401.25px;top:670.87px;font-size:12.2px;color:#dcdcdc;font-weight:400;transform:scaleX(0.9798);">70</span>
<span class="t" style="left:453.25px;top:670.87px;font-size:12.2px;color:#dcdcdc;font-weight:400;transform:scaleX(0.9798);">80</span>
<span class="t" style="left:505.25px;top:670.87px;font-size:12.2px;color:#dcdcdc;font-weight:400;transform:scaleX(0.9798);">90</span>
<span class="t" style="left:562.25px;top:670.87px;font-size:12.2px;color:#dcdcdc;font-weight:400;transform:scaleX(0.9486);">100</span>
<span class="t" style="left:614.25px;top:670.87px;font-size:12.2px;color:#dcdcdc;font-weight:400;transform:scaleX(0.9923);">110</span>
<span class="t" style="left:666.45px;top:670.87px;font-size:12.2px;color:#dcdcdc;font-weight:400;transform:scaleX(0.9486);">120</span>
<span class="t" style="left:721.95px;top:670.87px;font-size:12.2px;color:#dcdcdc;font-weight:400;transform:scaleX(0.9486);">130</span>
<span class="t" style="left:776.55px;top:670.87px;font-size:12.2px;color:#dcdcdc;font-weight:400;transform:scaleX(0.9486);">140</span>
<span class="t" style="left:832.25px;top:670.87px;font-size:12.2px;color:#dcdcdc;font-weight:400;transform:scaleX(0.9486);">150</span>
<span class="t" style="left:887.25px;top:670.87px;font-size:12.2px;color:#dcdcdc;font-weight:400;transform:scaleX(0.9486);">160</span>
<span class="t" style="left:942.25px;top:670.87px;font-size:12.2px;color:#dcdcdc;font-weight:400;transform:scaleX(0.9486);">170</span>
<span class="t" style="left:994.25px;top:670.87px;font-size:12.2px;color:#dcdcdc;font-weight:400;transform:scaleX(0.9486);">180</span>
<span class="t" style="left:1045.25px;top:670.87px;font-size:12.2px;color:#dcdcdc;font-weight:400;transform:scaleX(0.9486);">190</span>
<span class="t" style="left:1100.25px;top:670.87px;font-size:12.2px;color:#dcdcdc;font-weight:400;transform:scaleX(0.9486);">200</span>
<span class="t" style="left:1155.25px;top:670.87px;font-size:12.2px;color:#dcdcdc;font-weight:400;transform:scaleX(0.9486);">210</span>
<span class="t" style="left:1211.25px;top:670.87px;font-size:12.2px;color:#dcdcdc;font-weight:400;transform:scaleX(0.9486);">220</span>
<span class="t" style="left:1262.75px;top:670.87px;font-size:12.2px;color:#dcdcdc;font-weight:400;transform:scaleX(0.9486);">230</span>
<span class="t" style="left:1318.25px;top:670.87px;font-size:12.2px;color:#dcdcdc;font-weight:400;transform:scaleX(0.9486);">240</span>
<span class="t" style="left:1369.25px;top:670.87px;font-size:12.2px;color:#dcdcdc;font-weight:400;transform:scaleX(0.9486);">250</span>
<span class="t" style="left:1424.85px;top:670.87px;font-size:12.2px;color:#dcdcdc;font-weight:400;transform:scaleX(0.9486);">260</span>
<span class="t" style="left:1476.65px;top:670.87px;font-size:12.2px;color:#dcdcdc;font-weight:400;transform:scaleX(0.9486);">270</span>
<span class="t" style="left:60.70px;top:797.31px;font-size:30px;color:#000;font-weight:700;transform:scaleX(1.1791);-webkit-text-stroke:1.2px #000;">Start</span>
<span class="t" style="left:238.93px;top:800.52px;font-size:21px;color:#111;font-weight:400;transform:scaleX(1.0679);">New folder (3)</span>
<span class="t" style="left:468.99px;top:800.52px;font-size:21px;color:#111;font-weight:400;transform:scaleX(1.0140);">My Projects</span>
<span class="t" style="left:708.30px;top:800.52px;font-size:21px;color:#111;font-weight:400;transform:scaleX(1.0222);">Toxic.blend</span>
<span class="t" style="left:1399.50px;top:799.26px;font-size:24.5px;color:#111;font-weight:400;transform:scaleX(1.0019);">01:20</span>
<span class="vtt" style="left:1494.1px;top:131.7px;font-size:12.5px;color:#dedede;transform:rotate(90deg) scaleX(0.9302)">Item</span>
<span class="vtt" style="left:1494.1px;top:187.3px;font-size:12.5px;color:#8c8c8c;transform:rotate(90deg) scaleX(1.0201)">Tool</span>
<span class="vtt" style="left:1494.1px;top:241.5px;font-size:12.5px;color:#8c8c8c;transform:rotate(90deg) scaleX(0.8621)">View</span>
<span class="vtt" style="left:1494.1px;top:304.2px;font-size:12.5px;color:#8c8c8c;transform:rotate(90deg) scaleX(0.9438)">AI</span>
<span class="vtt" style="left:1494.1px;top:342.4px;font-size:12.5px;color:#8c8c8c;transform:rotate(90deg) scaleX(0.9135)">Mixamo</span>
<svg width="1500" height="844" viewBox="0 0 1500 844" style="z-index:9">
<rect x="826.3" y="682" width="3.8" height="90" fill="#3e5fa8" stroke="#b9b9b9" stroke-width="0.9"/>
<rect x="813" y="670.7" width="29.5" height="12.8" rx="5" fill="#3a5aa4" stroke="#b9b9b9" stroke-width="1.6"/>
<rect x="827.1" y="680" width="2.2" height="6" fill="#3e5fa8"/>
</svg>
</div></body></html>
